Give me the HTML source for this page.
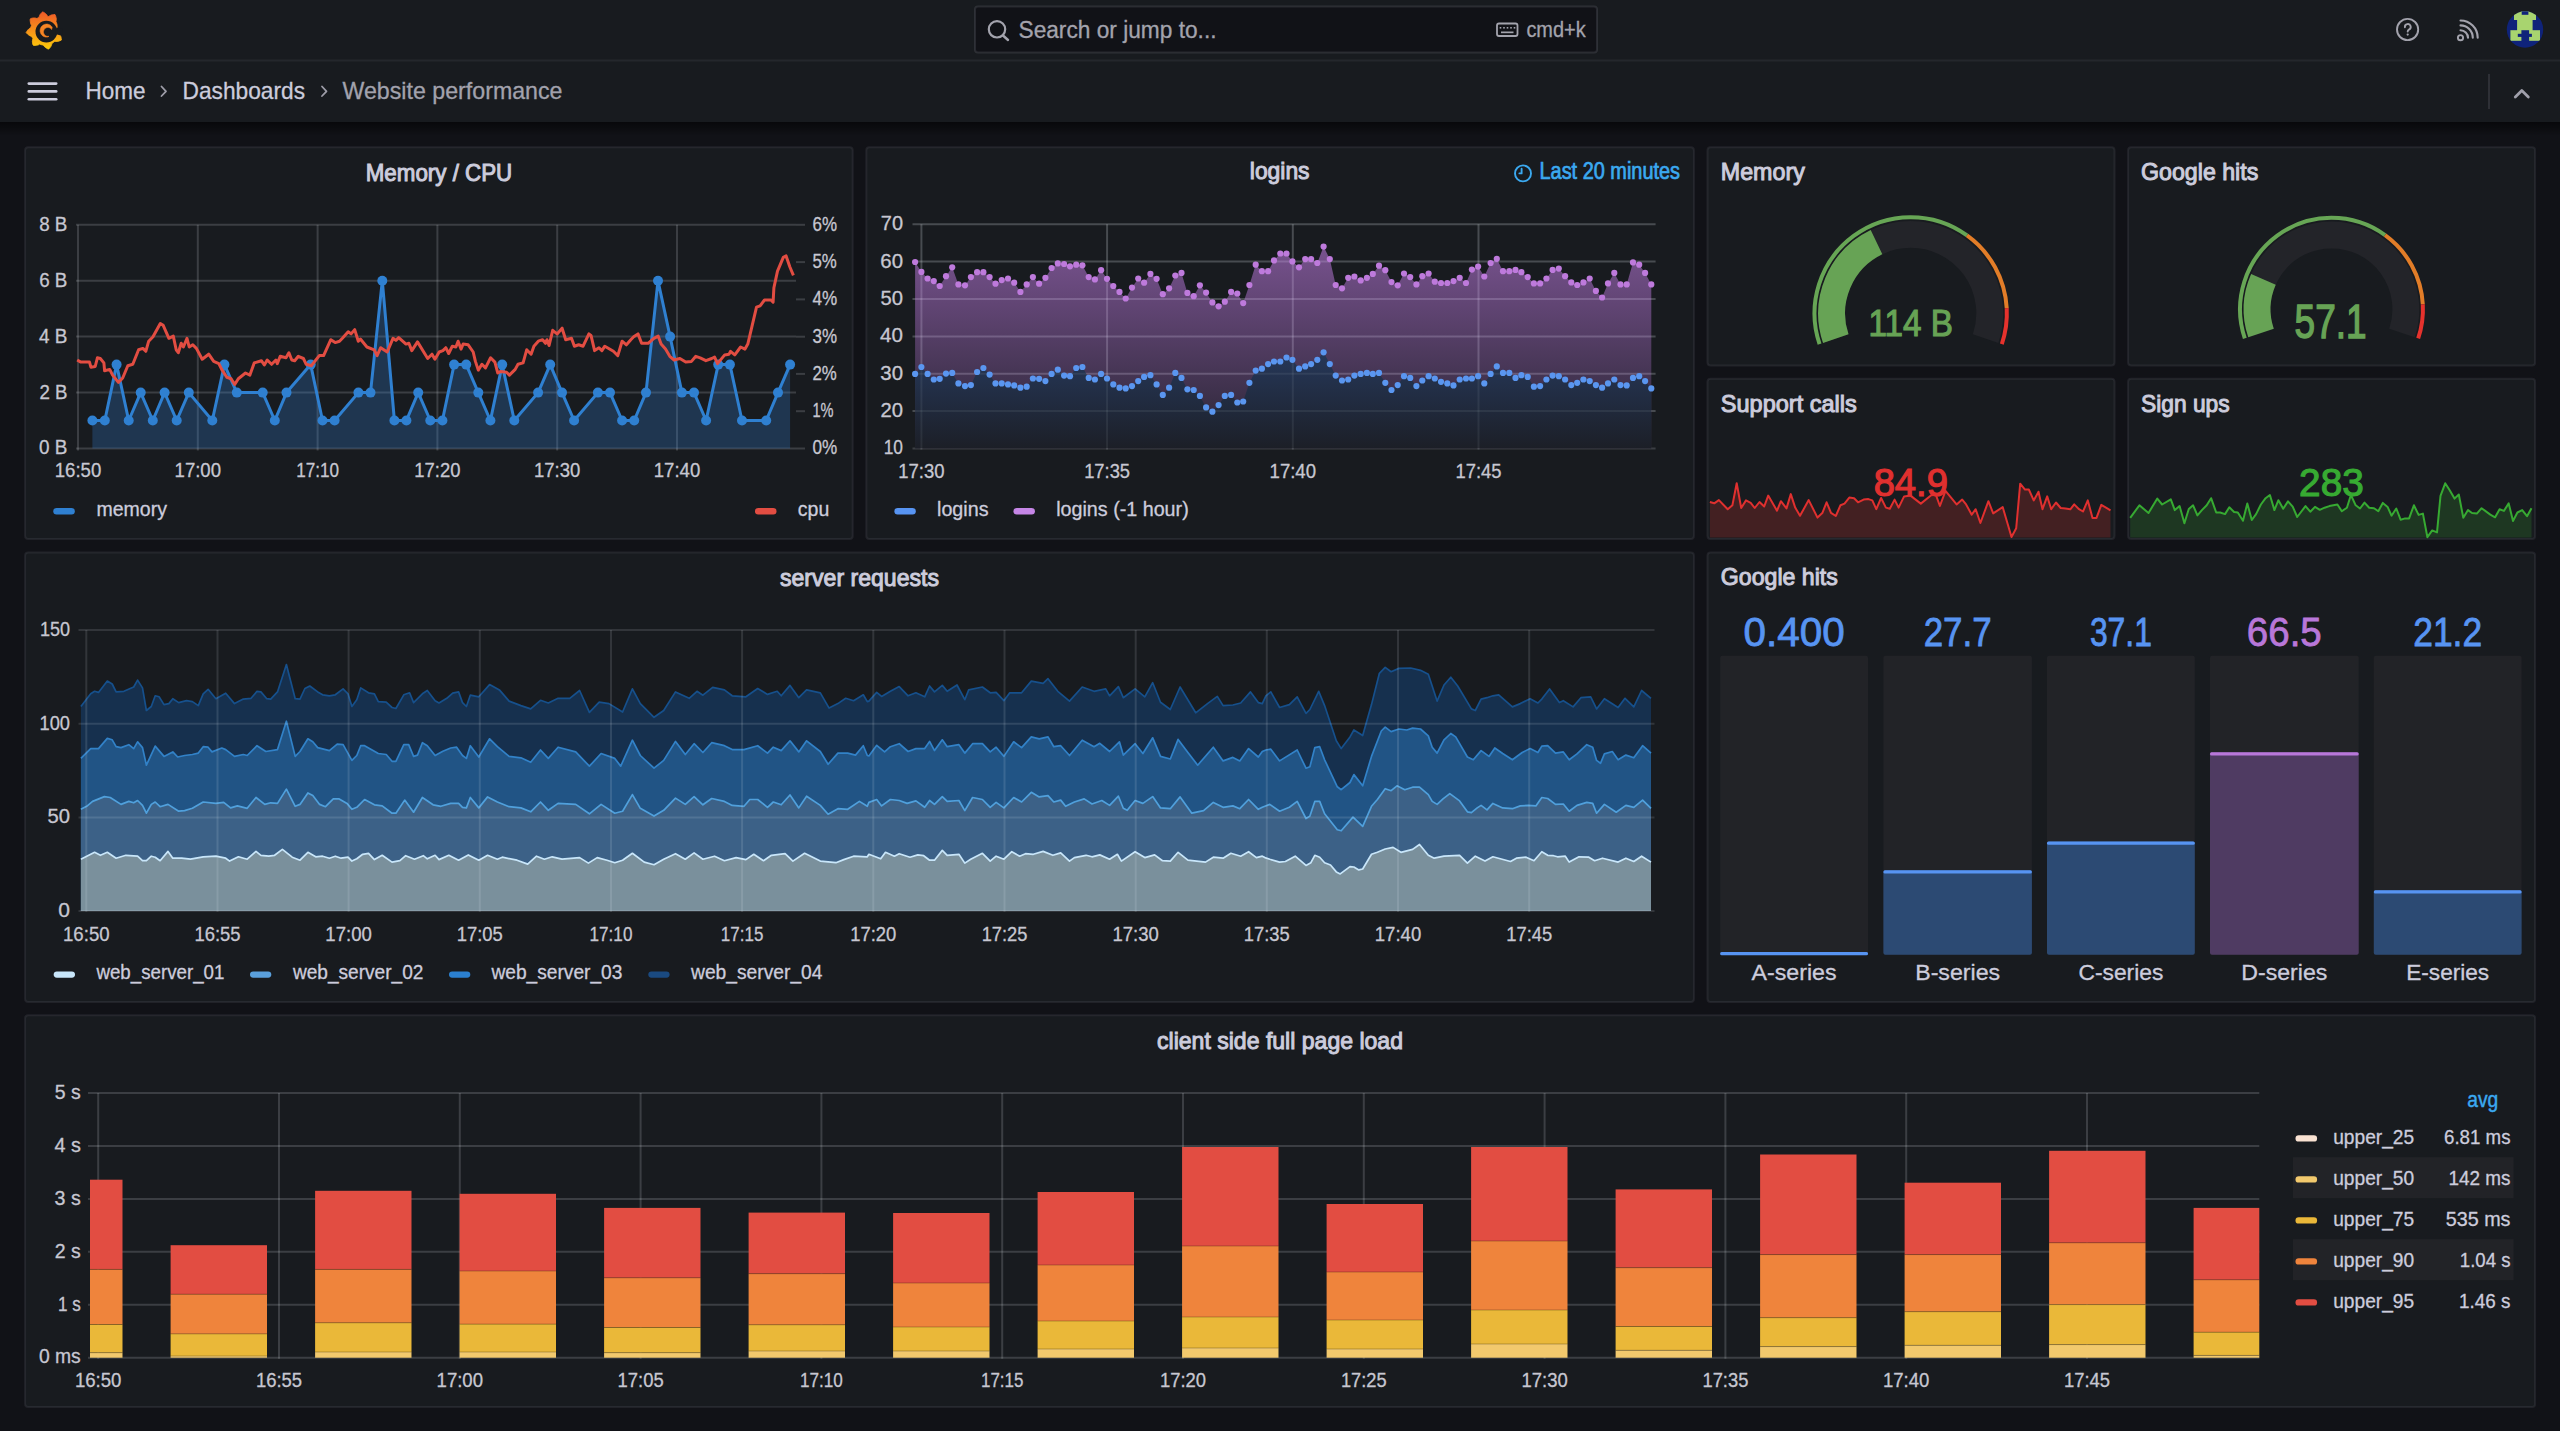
<!DOCTYPE html><html><head><meta charset="utf-8"><style>
html,body{margin:0;padding:0;background:#111217;width:2560px;height:1431px;overflow:hidden;}
svg{display:block;position:absolute;left:0;top:0;}
svg text{font-family:"Liberation Sans", sans-serif;}
</style></head><body>
<svg width="2560" height="1431" viewBox="0 0 2560 1431">
<defs>
<linearGradient id="logoG" x1="0" y1="0" x2="0" y2="1"><stop offset="0" stop-color="#f05a28"/><stop offset="1" stop-color="#fbca0a"/></linearGradient>
<linearGradient id="shadowG" x1="0" y1="0" x2="0" y2="1"><stop offset="0" stop-color="#000" stop-opacity="0.55"/><stop offset="1" stop-color="#000" stop-opacity="0"/></linearGradient>
<linearGradient id="purpG" x1="0" y1="0" x2="0" y2="1"><stop offset="0" stop-color="#b877d9" stop-opacity="0.6"/><stop offset="1" stop-color="#b877d9" stop-opacity="0.1"/></linearGradient>
<linearGradient id="blueG" x1="0" y1="0" x2="0" y2="1"><stop offset="0" stop-color="#26385a"/><stop offset="1" stop-color="#1c1f27"/></linearGradient>
<clipPath id="avClip"><circle cx="2525" cy="29.5" r="18.2"/></clipPath>
</defs>
<rect x="0" y="0" width="2560" height="1431" fill="#111217"/>

<rect x="0" y="0" width="2560" height="122" fill="#181b1f"/>
<rect x="0" y="59.5" width="2560" height="2" fill="rgba(204,204,220,0.07)"/>
<rect x="0" y="122" width="2560" height="14" fill="url(#shadowG)"/>
<path d="M27.4,30.6 L27.0,31.2 L26.6,31.9 L26.2,32.6 L26.7,33.2 L27.2,33.7 L27.8,34.3 L28.4,34.7 L29.0,35.2 L29.6,35.6 L30.3,35.9 L31.1,36.2 L31.8,36.5 L32.0,37.0 L32.2,37.4 L32.4,37.9 L32.7,38.3 L33.0,38.7 L32.6,39.6 L32.5,40.4 L32.4,41.1 L32.4,41.9 L32.5,42.7 L32.6,43.4 L32.8,44.2 L33.0,44.9 L33.5,45.3 L34.3,45.4 L35.0,45.4 L35.8,45.3 L36.5,45.2 L37.3,45.1 L38.0,44.9 L38.8,44.6 L39.6,44.0 L40.0,44.2 L40.5,44.4 L41.0,44.5 L41.5,44.7 L42.0,44.8 L42.5,44.9 L43.0,45.0 L43.5,45.0 L43.9,45.9 L44.4,46.5 L45.0,47.0 L45.6,47.5 L46.2,47.9 L46.9,48.3 L47.5,48.7 L48.2,49.0 L48.9,48.9 L49.4,48.3 L49.9,47.7 L50.4,47.1 L50.8,46.5 L51.1,45.8 L51.5,45.1 L51.7,44.3 L51.8,43.4 L52.2,43.2 L52.7,42.9 L53.1,42.6 L53.5,42.3 L53.9,42.0 L54.3,41.7 L54.7,41.4 L55.4,41.4 L56.2,41.4 L57.0,41.4 L57.8,41.3 L58.5,41.2 L59.2,40.9 L60.0,40.7 L60.7,40.4 L61.4,40.0 L61.3,39.3 L61.2,38.5 L61.1,37.8 L60.9,37.0 L60.7,36.3 L60.4,35.6 L60.0,34.9 L59.5,34.2 L54.8,32.7 L54.8,32.3 L54.9,32.0 L54.9,31.6 L55.0,31.3 L55.0,30.9 L55.0,30.6 L55.0,30.3 L55.0,29.9 L54.9,29.6 L54.9,29.2 L54.8,28.9 L54.8,28.5 L57.1,27.6 L57.1,27.1 L57.1,26.7 L57.1,26.2 L57.1,25.7 L57.0,25.2 L57.0,24.8 L56.9,24.3 L56.8,23.8 L56.6,23.3 L56.5,22.8 L56.3,22.4 L56.2,21.9 L55.9,21.4 L56.1,20.6 L56.2,19.8 L56.2,19.0 L56.2,18.2 L56.0,17.5 L55.8,16.7 L55.6,16.0 L55.3,15.3 L55.0,14.6 L54.2,14.6 L53.5,14.7 L52.7,14.8 L52.0,14.9 L51.2,15.1 L50.5,15.4 L49.8,15.8 L49.1,16.2 L48.5,16.5 L48.0,16.4 L47.5,16.3 L47.1,15.5 L46.7,14.8 L46.1,14.2 L45.6,13.7 L45.0,13.2 L44.4,12.8 L43.7,12.4 L43.0,12.0 L42.4,12.1 L41.8,12.6 L41.3,13.2 L40.8,13.7 L40.3,14.3 L39.9,15.0 L39.6,15.7 L39.3,16.4 L39.1,17.4 L38.6,17.6 L38.2,17.8 L37.8,18.0 L37.3,18.3 L36.9,18.6 L36.0,18.2 L35.2,18.1 L34.5,18.0 L33.7,18.0 L32.9,18.1 L32.2,18.2 L31.4,18.4 L30.7,18.6 L30.3,19.1 L30.2,19.9 L30.2,20.6 L30.3,21.4 L30.4,22.1 L30.5,22.9 L30.7,23.6 L31.0,24.4 L31.6,25.2 L31.4,25.6 L31.2,26.1 L31.1,26.6 L30.9,27.1 L30.8,27.6 L30.3,28.0 L29.6,28.4 L28.9,28.9 L28.4,29.4 L27.9,30.0 Z" fill="url(#logoG)" stroke="url(#logoG)" stroke-width="1.0" stroke-linejoin="round"/>
<circle cx="46.4" cy="31.6" r="10.9" fill="#181b1f"/>
<path d="M55.1,34.1 L55.1,33.8 L55.2,33.5 L55.3,33.2 L55.3,32.9 L55.4,32.5 L55.4,32.2 L55.4,31.9 L55.4,31.6 L55.4,31.3 L55.4,31.0 L55.4,30.7 L55.3,30.3 L55.3,30.0 L55.2,29.7 L62.0,28.0 L62.1,28.5 L62.2,29.1 L62.3,29.7 L62.3,30.2 L62.4,30.8 L62.4,31.3 L62.4,31.9 L62.4,32.4 L62.3,33.0 L62.3,33.5 L62.2,34.1 L62.1,34.7 L62.0,35.2 L61.9,35.7 Z" fill="#181b1f"/>
<path d="M52.2,27.3 L51.9,26.9 L51.7,26.5 L51.4,26.2 L51.0,25.8 L50.7,25.5 L50.3,25.3 L49.9,25.0 L49.6,24.8 L49.1,24.6 L48.7,24.5 L48.3,24.3 L47.8,24.2 L47.4,24.1 L46.9,24.1 L46.5,24.1 L46.0,24.1 L45.6,24.2 L45.1,24.3 L44.7,24.4 L44.3,24.5 L43.9,24.7 L43.4,24.9 L43.1,25.1 L42.7,25.4 L42.3,25.7 L42.0,26.0 L41.7,26.3 L41.4,26.7 L41.1,27.1 L40.9,27.4 L40.7,27.9 L40.5,28.3 L40.4,28.7 L40.3,29.1 L40.2,29.6 L40.1,30.0 L40.1,30.5 L40.1,30.9 L40.1,31.4 L40.2,31.8 L40.3,32.3 L40.5,32.7 L40.6,33.1 L40.8,33.6 L41.0,33.9 L41.3,34.3 L41.5,34.7 L41.8,35.0 L42.2,35.4 L42.5,35.7 L42.9,35.9 L43.3,36.2 L43.6,36.4 L44.1,36.6 L44.5,36.7 L44.9,36.9 L45.4,37.0 L45.8,37.1 L46.3,37.1 L46.7,37.1 L47.2,37.1 L47.6,37.0 L48.1,36.9 L49.0,36.2 L48.7,36.2 L48.4,36.3 L48.1,36.3 L47.7,36.3 L47.4,36.3 L47.1,36.2 L46.8,36.2 L46.5,36.1 L46.3,36.0 L46.0,35.9 L45.7,35.7 L45.4,35.5 L45.2,35.4 L45.0,35.2 L44.7,35.0 L44.5,34.7 L44.3,34.5 L44.2,34.2 L44.0,34.0 L43.9,33.7 L43.8,33.4 L43.7,33.1 L43.6,32.8 L43.5,32.5 L43.5,32.2 L43.5,31.9 L43.5,31.6 L43.5,31.3 L43.6,31.0 L43.7,30.7 L43.8,30.4 L43.9,30.1 L44.0,29.8 L44.2,29.6 L44.3,29.3 L44.5,29.1 L44.7,28.8 L45.0,28.6 L45.2,28.4 L45.4,28.3 L45.7,28.1 L46.0,27.9 L46.3,27.8 L46.5,27.7 L46.8,27.6 L47.1,27.6 L47.4,27.5 L47.7,27.5 L48.1,27.5 L48.4,27.5 L48.7,27.6 L49.0,27.6 L49.3,27.7 L49.5,27.8 L49.8,27.9 L50.1,28.1 L50.4,28.3 L50.6,28.4 L50.8,28.6 L51.1,28.8 L51.3,29.1 L51.5,29.3 L51.6,29.6 Z" fill="#f68424" stroke="#f68424" stroke-width="0.6" stroke-linejoin="round"/>
<rect x="975" y="6.5" width="622" height="46" rx="3" fill="#111217" stroke="rgba(204,204,220,0.13)" stroke-width="2"/>
<circle cx="997" cy="29.3" r="8.2" fill="none" stroke="#a3a3ad" stroke-width="2.2"/>
<line x1="1003" y1="35.5" x2="1008" y2="40" stroke="#a3a3ad" stroke-width="2.4" stroke-linecap="round"/>
<text x="1018.5" y="37.8" font-size="23.5" fill="#a3a3ad" text-anchor="start" font-weight="normal" textLength="198" lengthAdjust="spacingAndGlyphs" stroke="#a3a3ad" stroke-width="0.3" >Search or jump to...</text>
<rect x="1497" y="23.5" width="20.5" height="12.5" rx="2" fill="none" stroke="#a3a3ad" stroke-width="1.8"/>
<rect x="1499.7" y="27" width="1.6" height="1.6" fill="#a3a3ad"/>
<rect x="1503.2" y="27" width="1.6" height="1.6" fill="#a3a3ad"/>
<rect x="1506.7" y="27" width="1.6" height="1.6" fill="#a3a3ad"/>
<rect x="1510.2" y="27" width="1.6" height="1.6" fill="#a3a3ad"/>
<rect x="1513.7" y="27" width="1.6" height="1.6" fill="#a3a3ad"/>
<rect x="1501" y="31.5" width="12.5" height="1.7" fill="#a3a3ad"/>
<text x="1526.4" y="36.6" font-size="22" fill="#a3a3ad" text-anchor="start" font-weight="normal" textLength="59.3" lengthAdjust="spacingAndGlyphs" stroke="#a3a3ad" stroke-width="0.3" >cmd+k</text>
<circle cx="2407.6" cy="29.5" r="10.6" fill="none" stroke="#a3a3ad" stroke-width="1.9"/>
<path d="M2404.9,27.2 A2.9,2.9 0 1 1 2408.9,29.6 Q2407.7,30.3 2407.7,31.6" fill="none" stroke="#a3a3ad" stroke-width="1.9" stroke-linecap="round"/>
<circle cx="2407.7" cy="34.6" r="1.1" fill="#a3a3ad"/>
<circle cx="2460.5" cy="37.7" r="2.6" fill="none" stroke="#a3a3ad" stroke-width="1.9"/>
<path d="M2460.5,30.2 A7.5,7.5 0 0 1 2468.0,37.7" fill="none" stroke="#a3a3ad" stroke-width="2.1" stroke-linecap="round"/>
<path d="M2460.5,25.4 A12.3,12.3 0 0 1 2472.8,37.7" fill="none" stroke="#a3a3ad" stroke-width="2.1" stroke-linecap="round"/>
<path d="M2460.5,20.5 A17.2,17.2 0 0 1 2477.7,37.7" fill="none" stroke="#a3a3ad" stroke-width="2.1" stroke-linecap="round"/>
<g clip-path="url(#avClip)">
<rect x="2505" y="10" width="40" height="40" fill="#0f237a"/>
<rect x="2514" y="11" width="22" height="9" fill="#a8d46f"/>
<rect x="2521.7" y="10" width="6.7" height="4.8" fill="#0f237a"/>
<rect x="2517.1" y="19" width="15.5" height="12" fill="#a8d46f"/>
<rect x="2510.4" y="30.2" width="29.6" height="10.6" fill="#a8d46f"/>
<rect x="2521.4" y="30.2" width="7.7" height="11" fill="#0f237a"/>
<rect x="2517.8" y="33.8" width="14.1" height="3.1" fill="#0f237a"/>
</g>
<rect x="27.5" y="82.3" width="30" height="2.6" rx="1.3" fill="#ccccdc"/>
<rect x="27.5" y="90.1" width="30" height="2.6" rx="1.3" fill="#ccccdc"/>
<rect x="27.5" y="97.89999999999999" width="30" height="2.6" rx="1.3" fill="#ccccdc"/>
<text x="85.5" y="99.1" font-size="23.8" fill="#ccccdc" text-anchor="start" font-weight="normal" textLength="60" lengthAdjust="spacingAndGlyphs" stroke="#ccccdc" stroke-width="0.3" >Home</text>
<path d="M161.5,86.5 L166,91.3 L161.5,96" fill="none" stroke="#9d9da8" stroke-width="1.8" stroke-linecap="round" stroke-linejoin="round"/>
<text x="182.5" y="99.1" font-size="23.8" fill="#ccccdc" text-anchor="start" font-weight="normal" textLength="122.5" lengthAdjust="spacingAndGlyphs" stroke="#ccccdc" stroke-width="0.3" >Dashboards</text>
<path d="M322,86.5 L326.5,91.3 L322,96" fill="none" stroke="#9d9da8" stroke-width="1.8" stroke-linecap="round" stroke-linejoin="round"/>
<text x="342.5" y="99.1" font-size="23.8" fill="#a2a2ad" text-anchor="start" font-weight="normal" textLength="220" lengthAdjust="spacingAndGlyphs" stroke="#a2a2ad" stroke-width="0.3" >Website performance</text>
<rect x="2488" y="74" width="2" height="35" fill="rgba(204,204,220,0.12)"/>
<path d="M2515.3,97 L2521.8,90.6 L2528.3,97" fill="none" stroke="#a0a0ab" stroke-width="2.8" stroke-linecap="round" stroke-linejoin="round"/>
<rect x="25.1" y="147.3" width="827.6" height="391.8" rx="3" fill="#181b1f" stroke="rgba(204,204,220,0.09)" stroke-width="2"/>
<text x="439.0" y="180.5" font-size="24" fill="#ccccdc" text-anchor="middle" font-weight="normal" textLength="146.5" lengthAdjust="spacingAndGlyphs" stroke="#ccccdc" stroke-width="1.008" >Memory / CPU</text>
<line x1="76" y1="448.5" x2="796" y2="448.5" stroke="rgba(240,250,255,0.16)" stroke-width="2"/>
<text x="67.4" y="454.4" font-size="20" fill="#c7c7d1" text-anchor="end" font-weight="normal" textLength="28.4" lengthAdjust="spacingAndGlyphs" stroke="#c7c7d1" stroke-width="0.3" >0 B</text>
<line x1="76" y1="392.6" x2="796" y2="392.6" stroke="rgba(240,250,255,0.16)" stroke-width="2"/>
<text x="67.4" y="398.5" font-size="20" fill="#c7c7d1" text-anchor="end" font-weight="normal" textLength="28.0" lengthAdjust="spacingAndGlyphs" stroke="#c7c7d1" stroke-width="0.3" >2 B</text>
<line x1="76" y1="336.6" x2="796" y2="336.6" stroke="rgba(240,250,255,0.16)" stroke-width="2"/>
<text x="67.4" y="342.5" font-size="20" fill="#c7c7d1" text-anchor="end" font-weight="normal" textLength="28.4" lengthAdjust="spacingAndGlyphs" stroke="#c7c7d1" stroke-width="0.3" >4 B</text>
<line x1="76" y1="280.7" x2="796" y2="280.7" stroke="rgba(240,250,255,0.16)" stroke-width="2"/>
<text x="67.4" y="286.6" font-size="20" fill="#c7c7d1" text-anchor="end" font-weight="normal" textLength="28.2" lengthAdjust="spacingAndGlyphs" stroke="#c7c7d1" stroke-width="0.3" >6 B</text>
<line x1="76" y1="224.8" x2="796" y2="224.8" stroke="rgba(240,250,255,0.16)" stroke-width="2"/>
<text x="67.4" y="230.7" font-size="20" fill="#c7c7d1" text-anchor="end" font-weight="normal" textLength="28.2" lengthAdjust="spacingAndGlyphs" stroke="#c7c7d1" stroke-width="0.3" >8 B</text>
<line x1="796" y1="448.5" x2="805" y2="448.5" stroke="rgba(240,250,255,0.16)" stroke-width="2"/>
<text x="812.5" y="454.4" font-size="20" fill="#c7c7d1" text-anchor="start" font-weight="normal" textLength="24.7" lengthAdjust="spacingAndGlyphs" stroke="#c7c7d1" stroke-width="0.3" >0%</text>
<line x1="796" y1="411.2" x2="805" y2="411.2" stroke="rgba(240,250,255,0.16)" stroke-width="2"/>
<text x="812.5" y="417.1" font-size="20" fill="#c7c7d1" text-anchor="start" font-weight="normal" textLength="21.1" lengthAdjust="spacingAndGlyphs" stroke="#c7c7d1" stroke-width="0.3" >1%</text>
<line x1="796" y1="373.9" x2="805" y2="373.9" stroke="rgba(240,250,255,0.16)" stroke-width="2"/>
<text x="812.5" y="379.8" font-size="20" fill="#c7c7d1" text-anchor="start" font-weight="normal" textLength="24.3" lengthAdjust="spacingAndGlyphs" stroke="#c7c7d1" stroke-width="0.3" >2%</text>
<line x1="796" y1="336.7" x2="805" y2="336.7" stroke="rgba(240,250,255,0.16)" stroke-width="2"/>
<text x="812.5" y="342.6" font-size="20" fill="#c7c7d1" text-anchor="start" font-weight="normal" textLength="24.5" lengthAdjust="spacingAndGlyphs" stroke="#c7c7d1" stroke-width="0.3" >3%</text>
<line x1="796" y1="299.4" x2="805" y2="299.4" stroke="rgba(240,250,255,0.16)" stroke-width="2"/>
<text x="812.5" y="305.3" font-size="20" fill="#c7c7d1" text-anchor="start" font-weight="normal" textLength="24.7" lengthAdjust="spacingAndGlyphs" stroke="#c7c7d1" stroke-width="0.3" >4%</text>
<line x1="796" y1="262.1" x2="805" y2="262.1" stroke="rgba(240,250,255,0.16)" stroke-width="2"/>
<text x="812.5" y="268.0" font-size="20" fill="#c7c7d1" text-anchor="start" font-weight="normal" textLength="24.3" lengthAdjust="spacingAndGlyphs" stroke="#c7c7d1" stroke-width="0.3" >5%</text>
<line x1="796" y1="224.8" x2="805" y2="224.8" stroke="rgba(240,250,255,0.16)" stroke-width="2"/>
<text x="812.5" y="230.7" font-size="20" fill="#c7c7d1" text-anchor="start" font-weight="normal" textLength="24.5" lengthAdjust="spacingAndGlyphs" stroke="#c7c7d1" stroke-width="0.3" >6%</text>
<line x1="78.0" y1="224.8" x2="78.0" y2="450.5" stroke="rgba(240,250,255,0.16)" stroke-width="2"/>
<text x="78.0" y="477.2" font-size="20" fill="#c7c7d1" text-anchor="middle" font-weight="normal" textLength="46.6" lengthAdjust="spacingAndGlyphs" stroke="#c7c7d1" stroke-width="0.3" >16:50</text>
<line x1="197.8" y1="224.8" x2="197.8" y2="450.5" stroke="rgba(240,250,255,0.16)" stroke-width="2"/>
<text x="197.8" y="477.2" font-size="20" fill="#c7c7d1" text-anchor="middle" font-weight="normal" textLength="46.5" lengthAdjust="spacingAndGlyphs" stroke="#c7c7d1" stroke-width="0.3" >17:00</text>
<line x1="317.6" y1="224.8" x2="317.6" y2="450.5" stroke="rgba(240,250,255,0.16)" stroke-width="2"/>
<text x="317.6" y="477.2" font-size="20" fill="#c7c7d1" text-anchor="middle" font-weight="normal" textLength="42.9" lengthAdjust="spacingAndGlyphs" stroke="#c7c7d1" stroke-width="0.3" >17:10</text>
<line x1="437.4" y1="224.8" x2="437.4" y2="450.5" stroke="rgba(240,250,255,0.16)" stroke-width="2"/>
<text x="437.4" y="477.2" font-size="20" fill="#c7c7d1" text-anchor="middle" font-weight="normal" textLength="46.1" lengthAdjust="spacingAndGlyphs" stroke="#c7c7d1" stroke-width="0.3" >17:20</text>
<line x1="557.2" y1="224.8" x2="557.2" y2="450.5" stroke="rgba(240,250,255,0.16)" stroke-width="2"/>
<text x="557.2" y="477.2" font-size="20" fill="#c7c7d1" text-anchor="middle" font-weight="normal" textLength="46.3" lengthAdjust="spacingAndGlyphs" stroke="#c7c7d1" stroke-width="0.3" >17:30</text>
<line x1="677.0" y1="224.8" x2="677.0" y2="450.5" stroke="rgba(240,250,255,0.16)" stroke-width="2"/>
<text x="677.0" y="477.2" font-size="20" fill="#c7c7d1" text-anchor="middle" font-weight="normal" textLength="46.5" lengthAdjust="spacingAndGlyphs" stroke="#c7c7d1" stroke-width="0.3" >17:40</text>
<path d="M92.4,420.5 L104.8,420.5 L116.6,364.6 L128.7,420.5 L140.7,392.6 L152.8,420.5 L164.6,392.6 L176.7,420.5 L188.8,392.6 L212.3,420.5 L224.4,364.6 L236.8,392.6 L262.7,392.6 L274.8,420.5 L286.5,392.6 L310.7,364.6 L322.5,420.5 L334.6,420.5 L358.4,392.6 L370.5,392.6 L382.3,280.7 L394.4,420.5 L406.4,420.5 L418.2,392.6 L430.3,420.5 L442.4,420.5 L454.1,364.6 L466.2,364.6 L478.3,392.6 L490.4,420.5 L502.2,364.6 L514.3,420.5 L538.1,392.6 L550.2,364.6 L562.0,392.6 L574.1,420.5 L597.9,392.6 L610.0,392.6 L622.1,420.5 L634.2,420.5 L646.0,392.6 L658.0,280.7 L670.1,336.6 L681.9,392.6 L694.0,392.6 L706.1,420.5 L718.2,364.6 L729.9,364.6 L742.0,420.5 L766.2,420.5 L778.0,392.6 L790.1,364.6 L790.1,448.5 L92.4,448.5 Z" fill="rgba(50,130,215,0.27)"/>
<path d="M92.4,420.5 L104.8,420.5 L116.6,364.6 L128.7,420.5 L140.7,392.6 L152.8,420.5 L164.6,392.6 L176.7,420.5 L188.8,392.6 L212.3,420.5 L224.4,364.6 L236.8,392.6 L262.7,392.6 L274.8,420.5 L286.5,392.6 L310.7,364.6 L322.5,420.5 L334.6,420.5 L358.4,392.6 L370.5,392.6 L382.3,280.7 L394.4,420.5 L406.4,420.5 L418.2,392.6 L430.3,420.5 L442.4,420.5 L454.1,364.6 L466.2,364.6 L478.3,392.6 L490.4,420.5 L502.2,364.6 L514.3,420.5 L538.1,392.6 L550.2,364.6 L562.0,392.6 L574.1,420.5 L597.9,392.6 L610.0,392.6 L622.1,420.5 L634.2,420.5 L646.0,392.6 L658.0,280.7 L670.1,336.6 L681.9,392.6 L694.0,392.6 L706.1,420.5 L718.2,364.6 L729.9,364.6 L742.0,420.5 L766.2,420.5 L778.0,392.6 L790.1,364.6" fill="none" stroke="#2f80d1" stroke-width="3" stroke-linejoin="round"/>
<circle cx="92.4" cy="420.5" r="5" fill="#2f80d1"/>
<circle cx="104.8" cy="420.5" r="5" fill="#2f80d1"/>
<circle cx="116.6" cy="364.6" r="5" fill="#2f80d1"/>
<circle cx="128.7" cy="420.5" r="5" fill="#2f80d1"/>
<circle cx="140.7" cy="392.6" r="5" fill="#2f80d1"/>
<circle cx="152.8" cy="420.5" r="5" fill="#2f80d1"/>
<circle cx="164.6" cy="392.6" r="5" fill="#2f80d1"/>
<circle cx="176.7" cy="420.5" r="5" fill="#2f80d1"/>
<circle cx="188.8" cy="392.6" r="5" fill="#2f80d1"/>
<circle cx="212.3" cy="420.5" r="5" fill="#2f80d1"/>
<circle cx="224.4" cy="364.6" r="5" fill="#2f80d1"/>
<circle cx="236.8" cy="392.6" r="5" fill="#2f80d1"/>
<circle cx="262.7" cy="392.6" r="5" fill="#2f80d1"/>
<circle cx="274.8" cy="420.5" r="5" fill="#2f80d1"/>
<circle cx="286.5" cy="392.6" r="5" fill="#2f80d1"/>
<circle cx="310.7" cy="364.6" r="5" fill="#2f80d1"/>
<circle cx="322.5" cy="420.5" r="5" fill="#2f80d1"/>
<circle cx="334.6" cy="420.5" r="5" fill="#2f80d1"/>
<circle cx="358.4" cy="392.6" r="5" fill="#2f80d1"/>
<circle cx="370.5" cy="392.6" r="5" fill="#2f80d1"/>
<circle cx="382.3" cy="280.7" r="5" fill="#2f80d1"/>
<circle cx="394.4" cy="420.5" r="5" fill="#2f80d1"/>
<circle cx="406.4" cy="420.5" r="5" fill="#2f80d1"/>
<circle cx="418.2" cy="392.6" r="5" fill="#2f80d1"/>
<circle cx="430.3" cy="420.5" r="5" fill="#2f80d1"/>
<circle cx="442.4" cy="420.5" r="5" fill="#2f80d1"/>
<circle cx="454.1" cy="364.6" r="5" fill="#2f80d1"/>
<circle cx="466.2" cy="364.6" r="5" fill="#2f80d1"/>
<circle cx="478.3" cy="392.6" r="5" fill="#2f80d1"/>
<circle cx="490.4" cy="420.5" r="5" fill="#2f80d1"/>
<circle cx="502.2" cy="364.6" r="5" fill="#2f80d1"/>
<circle cx="514.3" cy="420.5" r="5" fill="#2f80d1"/>
<circle cx="538.1" cy="392.6" r="5" fill="#2f80d1"/>
<circle cx="550.2" cy="364.6" r="5" fill="#2f80d1"/>
<circle cx="562.0" cy="392.6" r="5" fill="#2f80d1"/>
<circle cx="574.1" cy="420.5" r="5" fill="#2f80d1"/>
<circle cx="597.9" cy="392.6" r="5" fill="#2f80d1"/>
<circle cx="610.0" cy="392.6" r="5" fill="#2f80d1"/>
<circle cx="622.1" cy="420.5" r="5" fill="#2f80d1"/>
<circle cx="634.2" cy="420.5" r="5" fill="#2f80d1"/>
<circle cx="646.0" cy="392.6" r="5" fill="#2f80d1"/>
<circle cx="658.0" cy="280.7" r="5" fill="#2f80d1"/>
<circle cx="670.1" cy="336.6" r="5" fill="#2f80d1"/>
<circle cx="681.9" cy="392.6" r="5" fill="#2f80d1"/>
<circle cx="694.0" cy="392.6" r="5" fill="#2f80d1"/>
<circle cx="706.1" cy="420.5" r="5" fill="#2f80d1"/>
<circle cx="718.2" cy="364.6" r="5" fill="#2f80d1"/>
<circle cx="729.9" cy="364.6" r="5" fill="#2f80d1"/>
<circle cx="742.0" cy="420.5" r="5" fill="#2f80d1"/>
<circle cx="766.2" cy="420.5" r="5" fill="#2f80d1"/>
<circle cx="778.0" cy="392.6" r="5" fill="#2f80d1"/>
<circle cx="790.1" cy="364.6" r="5" fill="#2f80d1"/>
<path d="M77.2,360.0 L80.8,362.1 L89.5,362.1 L90.9,367.2 L95.2,366.5 L97.4,357.8 L100.3,358.5 L103.9,362.9 L104.6,370.8 L109.7,369.4 L112.6,375.1 L118.4,382.4 L122.7,378.0 L127.8,365.7 L132.8,364.3 L138.6,349.8 L142.9,348.4 L145.8,351.3 L148.7,341.2 L153.0,336.8 L160.3,323.5 L163.2,325.3 L168.9,338.3 L173.3,336.1 L176.2,349.8 L178.3,352.7 L181.2,343.3 L183.4,347.0 L187.0,338.3 L189.2,347.0 L192.8,344.8 L196.4,348.4 L202.2,359.2 L208.7,354.2 L213.7,361.4 L218.8,363.6 L221.7,369.4 L226.8,377.3 L231.1,378.7 L234.7,384.5 L238.3,378.7 L245.5,373.0 L249.9,375.1 L254.2,362.9 L261.4,360.7 L264.3,365.0 L267.2,360.0 L271.6,364.3 L275.9,360.0 L277.3,363.6 L280.2,356.3 L286.0,357.8 L288.9,352.7 L291.8,360.0 L294.7,360.7 L298.3,356.3 L303.4,358.5 L306.2,364.3 L311.3,365.7 L319.3,355.6 L323.6,355.6 L330.8,339.7 L335.2,342.6 L339.5,341.2 L342.4,338.3 L348.2,331.8 L351.1,333.9 L354.7,329.6 L358.3,341.2 L360.4,339.0 L366.9,347.0 L374.2,349.8 L377.1,355.6 L380.7,347.7 L387.2,352.0 L393.0,338.3 L395.9,340.4 L398.7,337.6 L406.0,344.1 L408.9,343.3 L411.8,350.6 L417.5,341.9 L427.7,358.5 L432.0,354.2 L434.9,359.2 L439.2,352.0 L442.9,350.6 L445.8,347.7 L448.7,353.5 L452.3,346.2 L455.9,347.0 L458.1,341.2 L461.0,349.1 L463.1,344.1 L468.2,344.8 L473.2,352.0 L475.4,361.4 L478.3,370.1 L481.9,364.3 L485.5,367.9 L490.6,357.8 L494.9,362.1 L497.8,373.0 L500.7,371.5 L506.5,372.2 L509.4,375.1 L515.2,369.4 L518.0,364.3 L523.1,362.9 L526.7,349.8 L531.1,354.2 L533.9,346.2 L538.3,341.2 L542.6,339.7 L545.5,343.3 L547.0,339.7 L549.1,345.5 L552.7,330.3 L557.1,333.9 L562.1,328.2 L565.7,339.7 L571.5,338.3 L574.4,346.2 L578.7,344.8 L583.1,346.2 L588.9,333.9 L591.0,335.4 L594.6,350.6 L599.0,347.7 L601.9,350.6 L604.8,346.2 L613.4,351.3 L617.8,355.6 L622.1,341.2 L626.4,344.8 L630.8,339.7 L633.7,336.8 L638.0,333.9 L641.6,343.3 L648.1,343.3 L653.9,338.3 L658.2,336.1 L661.1,344.1 L665.5,349.1 L669.8,356.3 L674.1,360.0 L679.9,358.5 L685.7,362.1 L691.5,361.4 L695.8,356.3 L700.2,357.8 L705.9,360.7 L711.7,358.5 L714.6,357.1 L717.5,363.6 L724.7,354.9 L729.1,354.2 L730.5,351.3 L734.8,354.9 L740.6,347.0 L745.0,349.1 L747.8,344.1 L756.5,307.2 L760.1,305.8 L764.5,300.0 L771.0,300.0 L773.1,302.1 L773.9,287.7 L777.5,271.1 L783.3,257.3 L786.1,255.9 L789.8,266.7 L793.4,275.4" fill="none" stroke="#e24d42" stroke-width="3" stroke-linejoin="round"/>
<rect x="53.3" y="508" width="21.5" height="6.4" rx="3.2" fill="#2f80d1"/>
<text x="96.4" y="515.6" font-size="19.8" fill="#ccccdc" text-anchor="start" font-weight="normal" textLength="70.5" lengthAdjust="spacingAndGlyphs" stroke="#ccccdc" stroke-width="0.3" >memory</text>
<rect x="755" y="508" width="21.5" height="6.4" rx="3.2" fill="#e24d42"/>
<text x="797.8" y="515.6" font-size="19.8" fill="#ccccdc" text-anchor="start" font-weight="normal" textLength="31.5" lengthAdjust="spacingAndGlyphs" stroke="#ccccdc" stroke-width="0.3" >cpu</text>
<rect x="866.3" y="147.3" width="827.6" height="391.8" rx="3" fill="#181b1f" stroke="rgba(204,204,220,0.09)" stroke-width="2"/>
<text x="1279.7" y="179.4" font-size="24" fill="#ccccdc" text-anchor="middle" font-weight="normal" textLength="59.7" lengthAdjust="spacingAndGlyphs" stroke="#ccccdc" stroke-width="1.008" >logins</text>
<circle cx="1523" cy="173.4" r="8" fill="none" stroke="#3ba9f0" stroke-width="1.9"/>
<path d="M1521.6,168.8 L1521.6,173.4 L1519.4,173.4" fill="none" stroke="#3ba9f0" stroke-width="1.9" stroke-linecap="round" stroke-linejoin="round"/>
<text x="1539.5" y="178.6" font-size="23" fill="#3ba9f0" text-anchor="start" font-weight="normal" textLength="140.5" lengthAdjust="spacingAndGlyphs" stroke="#3ba9f0" stroke-width="0.69" >Last 20 minutes</text>
<line x1="912.5" y1="448.4" x2="1655.6" y2="448.4" stroke="rgba(240,250,255,0.16)" stroke-width="2"/>
<text x="903.0" y="454.3" font-size="20" fill="#c7c7d1" text-anchor="end" font-weight="normal" textLength="19.3" lengthAdjust="spacingAndGlyphs" stroke="#c7c7d1" stroke-width="0.3" >10</text>
<line x1="912.5" y1="411.0" x2="1655.6" y2="411.0" stroke="rgba(240,250,255,0.16)" stroke-width="2"/>
<text x="903.0" y="416.9" font-size="20" fill="#c7c7d1" text-anchor="end" font-weight="normal" textLength="22.5" lengthAdjust="spacingAndGlyphs" stroke="#c7c7d1" stroke-width="0.3" >20</text>
<line x1="912.5" y1="373.7" x2="1655.6" y2="373.7" stroke="rgba(240,250,255,0.16)" stroke-width="2"/>
<text x="903.0" y="379.6" font-size="20" fill="#c7c7d1" text-anchor="end" font-weight="normal" textLength="22.7" lengthAdjust="spacingAndGlyphs" stroke="#c7c7d1" stroke-width="0.3" >30</text>
<line x1="912.5" y1="336.4" x2="1655.6" y2="336.4" stroke="rgba(240,250,255,0.16)" stroke-width="2"/>
<text x="903.0" y="342.2" font-size="20" fill="#c7c7d1" text-anchor="end" font-weight="normal" textLength="22.9" lengthAdjust="spacingAndGlyphs" stroke="#c7c7d1" stroke-width="0.3" >40</text>
<line x1="912.5" y1="299.0" x2="1655.6" y2="299.0" stroke="rgba(240,250,255,0.16)" stroke-width="2"/>
<text x="903.0" y="304.9" font-size="20" fill="#c7c7d1" text-anchor="end" font-weight="normal" textLength="22.5" lengthAdjust="spacingAndGlyphs" stroke="#c7c7d1" stroke-width="0.3" >50</text>
<line x1="912.5" y1="261.6" x2="1655.6" y2="261.6" stroke="rgba(240,250,255,0.16)" stroke-width="2"/>
<text x="903.0" y="267.5" font-size="20" fill="#c7c7d1" text-anchor="end" font-weight="normal" textLength="22.7" lengthAdjust="spacingAndGlyphs" stroke="#c7c7d1" stroke-width="0.3" >60</text>
<line x1="912.5" y1="224.3" x2="1655.6" y2="224.3" stroke="rgba(240,250,255,0.16)" stroke-width="2"/>
<text x="903.0" y="230.2" font-size="20" fill="#c7c7d1" text-anchor="end" font-weight="normal" textLength="22.2" lengthAdjust="spacingAndGlyphs" stroke="#c7c7d1" stroke-width="0.3" >70</text>
<line x1="921.4" y1="224.3" x2="921.4" y2="449.4" stroke="rgba(240,250,255,0.16)" stroke-width="2"/>
<text x="921.4" y="477.5" font-size="20" fill="#c7c7d1" text-anchor="middle" font-weight="normal" textLength="46.3" lengthAdjust="spacingAndGlyphs" stroke="#c7c7d1" stroke-width="0.3" >17:30</text>
<line x1="1107.1" y1="224.3" x2="1107.1" y2="449.4" stroke="rgba(240,250,255,0.16)" stroke-width="2"/>
<text x="1107.1" y="477.5" font-size="20" fill="#c7c7d1" text-anchor="middle" font-weight="normal" textLength="45.9" lengthAdjust="spacingAndGlyphs" stroke="#c7c7d1" stroke-width="0.3" >17:35</text>
<line x1="1292.8" y1="224.3" x2="1292.8" y2="449.4" stroke="rgba(240,250,255,0.16)" stroke-width="2"/>
<text x="1292.8" y="477.5" font-size="20" fill="#c7c7d1" text-anchor="middle" font-weight="normal" textLength="46.5" lengthAdjust="spacingAndGlyphs" stroke="#c7c7d1" stroke-width="0.3" >17:40</text>
<line x1="1478.5" y1="224.3" x2="1478.5" y2="449.4" stroke="rgba(240,250,255,0.16)" stroke-width="2"/>
<text x="1478.5" y="477.5" font-size="20" fill="#c7c7d1" text-anchor="middle" font-weight="normal" textLength="46.1" lengthAdjust="spacingAndGlyphs" stroke="#c7c7d1" stroke-width="0.3" >17:45</text>
<path d="M915.1,262.0 L921.4,271.9 L927.6,278.5 L933.8,281.1 L939.7,286.0 L946.0,276.2 L952.2,267.3 L958.4,284.4 L965.0,285.3 L970.9,277.1 L977.1,272.2 L983.4,272.2 L989.6,277.1 L995.5,283.7 L1001.7,280.1 L1008.0,278.5 L1014.2,282.7 L1020.4,291.9 L1026.7,284.4 L1032.9,277.1 L1039.1,283.7 L1045.4,277.8 L1051.6,268.0 L1057.8,263.4 L1064.1,264.0 L1070.0,266.3 L1076.2,264.7 L1082.4,265.3 L1088.7,277.1 L1094.9,279.4 L1101.1,270.2 L1107.0,278.8 L1113.3,286.0 L1119.5,291.9 L1125.7,298.5 L1132.0,287.6 L1138.2,278.5 L1144.1,282.7 L1150.4,273.9 L1156.6,278.8 L1162.8,294.2 L1169.1,288.3 L1175.3,275.5 L1181.5,272.9 L1187.4,292.9 L1193.7,296.2 L1199.9,285.3 L1206.1,292.6 L1212.4,302.4 L1218.6,306.3 L1224.8,301.7 L1231.1,291.9 L1237.3,293.5 L1243.2,303.1 L1249.4,285.0 L1255.7,264.7 L1261.9,271.2 L1268.1,271.2 L1274.0,260.4 L1280.3,253.5 L1286.5,253.5 L1292.4,261.4 L1299.0,267.3 L1305.2,259.1 L1311.1,259.1 L1317.3,263.0 L1323.6,246.6 L1329.8,259.1 L1335.7,285.0 L1342.0,288.3 L1348.2,277.8 L1354.4,276.5 L1360.7,280.4 L1366.9,277.8 L1372.8,273.9 L1379.0,265.7 L1385.3,270.2 L1391.5,282.1 L1397.7,285.3 L1404.0,273.5 L1410.2,277.1 L1416.4,284.4 L1422.3,276.2 L1428.6,273.5 L1434.8,281.7 L1441.0,283.0 L1447.3,283.0 L1453.5,281.1 L1459.7,277.8 L1466.0,283.0 L1471.9,269.6 L1478.1,266.6 L1484.3,276.5 L1490.6,263.0 L1496.8,258.8 L1503.0,271.2 L1509.3,271.2 L1515.5,269.9 L1521.4,272.2 L1527.7,277.1 L1533.9,283.4 L1540.1,283.4 L1546.4,278.5 L1552.6,269.9 L1558.8,268.6 L1565.1,276.2 L1571.3,282.4 L1577.2,285.0 L1583.4,282.4 L1589.7,278.5 L1595.9,290.9 L1602.1,297.5 L1608.0,283.4 L1614.3,272.9 L1620.5,284.4 L1626.7,284.4 L1633.0,262.4 L1639.2,264.7 L1645.1,272.9 L1651.3,284.4 L1651.3,448.4 L915.1,448.4 Z" fill="url(#purpG)"/>
<path d="M915.1,373.9 L921.4,367.0 L927.6,373.9 L933.8,379.5 L939.7,378.8 L946.0,373.6 L952.2,372.9 L958.4,383.4 L965.0,386.1 L970.9,385.1 L977.1,372.0 L983.4,368.0 L989.6,374.6 L995.5,383.4 L1001.7,383.4 L1008.0,384.4 L1014.2,385.4 L1020.4,387.7 L1026.7,386.7 L1032.9,378.5 L1039.1,378.8 L1045.4,381.1 L1051.6,373.9 L1057.8,369.7 L1064.1,375.6 L1070.0,376.2 L1076.2,368.0 L1082.4,367.0 L1088.7,377.9 L1094.9,379.5 L1101.1,373.9 L1107.0,378.5 L1113.3,384.4 L1119.5,387.7 L1125.7,388.4 L1132.0,386.1 L1138.2,381.1 L1144.1,376.9 L1150.4,375.2 L1156.6,384.4 L1162.8,394.9 L1169.1,387.7 L1175.3,372.9 L1181.5,377.9 L1187.4,389.3 L1193.7,390.0 L1199.9,395.9 L1206.1,407.4 L1212.4,411.7 L1218.6,405.1 L1224.8,395.9 L1231.1,394.9 L1237.3,402.5 L1243.2,401.5 L1249.4,382.8 L1255.7,370.6 L1261.9,368.7 L1268.1,364.1 L1274.0,361.5 L1280.3,361.5 L1286.5,357.5 L1292.4,359.8 L1299.0,368.7 L1305.2,366.4 L1311.1,364.1 L1317.3,359.8 L1323.6,352.3 L1329.8,364.1 L1335.7,375.6 L1342.0,380.5 L1348.2,379.5 L1354.4,375.6 L1360.7,373.9 L1366.9,372.9 L1372.8,373.9 L1379.0,372.9 L1385.3,382.8 L1391.5,390.0 L1397.7,385.1 L1404.0,376.2 L1410.2,377.9 L1416.4,386.1 L1422.3,380.5 L1428.6,376.2 L1434.8,378.5 L1441.0,381.8 L1447.3,383.4 L1453.5,385.4 L1459.7,379.5 L1466.0,378.5 L1471.9,378.5 L1478.1,376.2 L1484.3,383.4 L1490.6,373.9 L1496.8,366.4 L1503.0,372.9 L1509.3,372.9 L1515.5,377.9 L1521.4,375.2 L1527.7,376.9 L1533.9,386.7 L1540.1,386.1 L1546.4,379.5 L1552.6,375.6 L1558.8,376.2 L1565.1,379.5 L1571.3,385.1 L1577.2,382.8 L1583.4,379.5 L1589.7,381.1 L1595.9,385.1 L1602.1,387.7 L1608.0,383.4 L1614.3,379.5 L1620.5,385.1 L1626.7,385.4 L1633.0,377.9 L1639.2,376.2 L1645.1,381.1 L1651.3,388.4 L1651.3,448.4 L915.1,448.4 Z" fill="url(#blueG)"/>
<line x1="912.5" y1="411.0" x2="1655.6" y2="411.0" stroke="rgba(240,250,255,0.07)" stroke-width="2"/>
<line x1="912.5" y1="373.7" x2="1655.6" y2="373.7" stroke="rgba(240,250,255,0.07)" stroke-width="2"/>
<line x1="912.5" y1="336.4" x2="1655.6" y2="336.4" stroke="rgba(240,250,255,0.07)" stroke-width="2"/>
<line x1="912.5" y1="299.0" x2="1655.6" y2="299.0" stroke="rgba(240,250,255,0.07)" stroke-width="2"/>
<line x1="912.5" y1="261.6" x2="1655.6" y2="261.6" stroke="rgba(240,250,255,0.07)" stroke-width="2"/>
<line x1="912.5" y1="224.3" x2="1655.6" y2="224.3" stroke="rgba(240,250,255,0.07)" stroke-width="2"/>
<line x1="921.4" y1="224.3" x2="921.4" y2="449.4" stroke="rgba(240,250,255,0.07)" stroke-width="2"/>
<line x1="1107.1" y1="224.3" x2="1107.1" y2="449.4" stroke="rgba(240,250,255,0.07)" stroke-width="2"/>
<line x1="1292.8" y1="224.3" x2="1292.8" y2="449.4" stroke="rgba(240,250,255,0.07)" stroke-width="2"/>
<line x1="1478.5" y1="224.3" x2="1478.5" y2="449.4" stroke="rgba(240,250,255,0.07)" stroke-width="2"/>
<circle cx="915.1" cy="262.0" r="3.1" fill="#be7adc"/>
<circle cx="921.4" cy="271.9" r="3.1" fill="#be7adc"/>
<circle cx="927.6" cy="278.5" r="3.1" fill="#be7adc"/>
<circle cx="933.8" cy="281.1" r="3.1" fill="#be7adc"/>
<circle cx="939.7" cy="286.0" r="3.1" fill="#be7adc"/>
<circle cx="946.0" cy="276.2" r="3.1" fill="#be7adc"/>
<circle cx="952.2" cy="267.3" r="3.1" fill="#be7adc"/>
<circle cx="958.4" cy="284.4" r="3.1" fill="#be7adc"/>
<circle cx="965.0" cy="285.3" r="3.1" fill="#be7adc"/>
<circle cx="970.9" cy="277.1" r="3.1" fill="#be7adc"/>
<circle cx="977.1" cy="272.2" r="3.1" fill="#be7adc"/>
<circle cx="983.4" cy="272.2" r="3.1" fill="#be7adc"/>
<circle cx="989.6" cy="277.1" r="3.1" fill="#be7adc"/>
<circle cx="995.5" cy="283.7" r="3.1" fill="#be7adc"/>
<circle cx="1001.7" cy="280.1" r="3.1" fill="#be7adc"/>
<circle cx="1008.0" cy="278.5" r="3.1" fill="#be7adc"/>
<circle cx="1014.2" cy="282.7" r="3.1" fill="#be7adc"/>
<circle cx="1020.4" cy="291.9" r="3.1" fill="#be7adc"/>
<circle cx="1026.7" cy="284.4" r="3.1" fill="#be7adc"/>
<circle cx="1032.9" cy="277.1" r="3.1" fill="#be7adc"/>
<circle cx="1039.1" cy="283.7" r="3.1" fill="#be7adc"/>
<circle cx="1045.4" cy="277.8" r="3.1" fill="#be7adc"/>
<circle cx="1051.6" cy="268.0" r="3.1" fill="#be7adc"/>
<circle cx="1057.8" cy="263.4" r="3.1" fill="#be7adc"/>
<circle cx="1064.1" cy="264.0" r="3.1" fill="#be7adc"/>
<circle cx="1070.0" cy="266.3" r="3.1" fill="#be7adc"/>
<circle cx="1076.2" cy="264.7" r="3.1" fill="#be7adc"/>
<circle cx="1082.4" cy="265.3" r="3.1" fill="#be7adc"/>
<circle cx="1088.7" cy="277.1" r="3.1" fill="#be7adc"/>
<circle cx="1094.9" cy="279.4" r="3.1" fill="#be7adc"/>
<circle cx="1101.1" cy="270.2" r="3.1" fill="#be7adc"/>
<circle cx="1107.0" cy="278.8" r="3.1" fill="#be7adc"/>
<circle cx="1113.3" cy="286.0" r="3.1" fill="#be7adc"/>
<circle cx="1119.5" cy="291.9" r="3.1" fill="#be7adc"/>
<circle cx="1125.7" cy="298.5" r="3.1" fill="#be7adc"/>
<circle cx="1132.0" cy="287.6" r="3.1" fill="#be7adc"/>
<circle cx="1138.2" cy="278.5" r="3.1" fill="#be7adc"/>
<circle cx="1144.1" cy="282.7" r="3.1" fill="#be7adc"/>
<circle cx="1150.4" cy="273.9" r="3.1" fill="#be7adc"/>
<circle cx="1156.6" cy="278.8" r="3.1" fill="#be7adc"/>
<circle cx="1162.8" cy="294.2" r="3.1" fill="#be7adc"/>
<circle cx="1169.1" cy="288.3" r="3.1" fill="#be7adc"/>
<circle cx="1175.3" cy="275.5" r="3.1" fill="#be7adc"/>
<circle cx="1181.5" cy="272.9" r="3.1" fill="#be7adc"/>
<circle cx="1187.4" cy="292.9" r="3.1" fill="#be7adc"/>
<circle cx="1193.7" cy="296.2" r="3.1" fill="#be7adc"/>
<circle cx="1199.9" cy="285.3" r="3.1" fill="#be7adc"/>
<circle cx="1206.1" cy="292.6" r="3.1" fill="#be7adc"/>
<circle cx="1212.4" cy="302.4" r="3.1" fill="#be7adc"/>
<circle cx="1218.6" cy="306.3" r="3.1" fill="#be7adc"/>
<circle cx="1224.8" cy="301.7" r="3.1" fill="#be7adc"/>
<circle cx="1231.1" cy="291.9" r="3.1" fill="#be7adc"/>
<circle cx="1237.3" cy="293.5" r="3.1" fill="#be7adc"/>
<circle cx="1243.2" cy="303.1" r="3.1" fill="#be7adc"/>
<circle cx="1249.4" cy="285.0" r="3.1" fill="#be7adc"/>
<circle cx="1255.7" cy="264.7" r="3.1" fill="#be7adc"/>
<circle cx="1261.9" cy="271.2" r="3.1" fill="#be7adc"/>
<circle cx="1268.1" cy="271.2" r="3.1" fill="#be7adc"/>
<circle cx="1274.0" cy="260.4" r="3.1" fill="#be7adc"/>
<circle cx="1280.3" cy="253.5" r="3.1" fill="#be7adc"/>
<circle cx="1286.5" cy="253.5" r="3.1" fill="#be7adc"/>
<circle cx="1292.4" cy="261.4" r="3.1" fill="#be7adc"/>
<circle cx="1299.0" cy="267.3" r="3.1" fill="#be7adc"/>
<circle cx="1305.2" cy="259.1" r="3.1" fill="#be7adc"/>
<circle cx="1311.1" cy="259.1" r="3.1" fill="#be7adc"/>
<circle cx="1317.3" cy="263.0" r="3.1" fill="#be7adc"/>
<circle cx="1323.6" cy="246.6" r="3.1" fill="#be7adc"/>
<circle cx="1329.8" cy="259.1" r="3.1" fill="#be7adc"/>
<circle cx="1335.7" cy="285.0" r="3.1" fill="#be7adc"/>
<circle cx="1342.0" cy="288.3" r="3.1" fill="#be7adc"/>
<circle cx="1348.2" cy="277.8" r="3.1" fill="#be7adc"/>
<circle cx="1354.4" cy="276.5" r="3.1" fill="#be7adc"/>
<circle cx="1360.7" cy="280.4" r="3.1" fill="#be7adc"/>
<circle cx="1366.9" cy="277.8" r="3.1" fill="#be7adc"/>
<circle cx="1372.8" cy="273.9" r="3.1" fill="#be7adc"/>
<circle cx="1379.0" cy="265.7" r="3.1" fill="#be7adc"/>
<circle cx="1385.3" cy="270.2" r="3.1" fill="#be7adc"/>
<circle cx="1391.5" cy="282.1" r="3.1" fill="#be7adc"/>
<circle cx="1397.7" cy="285.3" r="3.1" fill="#be7adc"/>
<circle cx="1404.0" cy="273.5" r="3.1" fill="#be7adc"/>
<circle cx="1410.2" cy="277.1" r="3.1" fill="#be7adc"/>
<circle cx="1416.4" cy="284.4" r="3.1" fill="#be7adc"/>
<circle cx="1422.3" cy="276.2" r="3.1" fill="#be7adc"/>
<circle cx="1428.6" cy="273.5" r="3.1" fill="#be7adc"/>
<circle cx="1434.8" cy="281.7" r="3.1" fill="#be7adc"/>
<circle cx="1441.0" cy="283.0" r="3.1" fill="#be7adc"/>
<circle cx="1447.3" cy="283.0" r="3.1" fill="#be7adc"/>
<circle cx="1453.5" cy="281.1" r="3.1" fill="#be7adc"/>
<circle cx="1459.7" cy="277.8" r="3.1" fill="#be7adc"/>
<circle cx="1466.0" cy="283.0" r="3.1" fill="#be7adc"/>
<circle cx="1471.9" cy="269.6" r="3.1" fill="#be7adc"/>
<circle cx="1478.1" cy="266.6" r="3.1" fill="#be7adc"/>
<circle cx="1484.3" cy="276.5" r="3.1" fill="#be7adc"/>
<circle cx="1490.6" cy="263.0" r="3.1" fill="#be7adc"/>
<circle cx="1496.8" cy="258.8" r="3.1" fill="#be7adc"/>
<circle cx="1503.0" cy="271.2" r="3.1" fill="#be7adc"/>
<circle cx="1509.3" cy="271.2" r="3.1" fill="#be7adc"/>
<circle cx="1515.5" cy="269.9" r="3.1" fill="#be7adc"/>
<circle cx="1521.4" cy="272.2" r="3.1" fill="#be7adc"/>
<circle cx="1527.7" cy="277.1" r="3.1" fill="#be7adc"/>
<circle cx="1533.9" cy="283.4" r="3.1" fill="#be7adc"/>
<circle cx="1540.1" cy="283.4" r="3.1" fill="#be7adc"/>
<circle cx="1546.4" cy="278.5" r="3.1" fill="#be7adc"/>
<circle cx="1552.6" cy="269.9" r="3.1" fill="#be7adc"/>
<circle cx="1558.8" cy="268.6" r="3.1" fill="#be7adc"/>
<circle cx="1565.1" cy="276.2" r="3.1" fill="#be7adc"/>
<circle cx="1571.3" cy="282.4" r="3.1" fill="#be7adc"/>
<circle cx="1577.2" cy="285.0" r="3.1" fill="#be7adc"/>
<circle cx="1583.4" cy="282.4" r="3.1" fill="#be7adc"/>
<circle cx="1589.7" cy="278.5" r="3.1" fill="#be7adc"/>
<circle cx="1595.9" cy="290.9" r="3.1" fill="#be7adc"/>
<circle cx="1602.1" cy="297.5" r="3.1" fill="#be7adc"/>
<circle cx="1608.0" cy="283.4" r="3.1" fill="#be7adc"/>
<circle cx="1614.3" cy="272.9" r="3.1" fill="#be7adc"/>
<circle cx="1620.5" cy="284.4" r="3.1" fill="#be7adc"/>
<circle cx="1626.7" cy="284.4" r="3.1" fill="#be7adc"/>
<circle cx="1633.0" cy="262.4" r="3.1" fill="#be7adc"/>
<circle cx="1639.2" cy="264.7" r="3.1" fill="#be7adc"/>
<circle cx="1645.1" cy="272.9" r="3.1" fill="#be7adc"/>
<circle cx="1651.3" cy="284.4" r="3.1" fill="#be7adc"/>
<circle cx="915.1" cy="373.9" r="3.1" fill="#5a96f0"/>
<circle cx="921.4" cy="367.0" r="3.1" fill="#5a96f0"/>
<circle cx="927.6" cy="373.9" r="3.1" fill="#5a96f0"/>
<circle cx="933.8" cy="379.5" r="3.1" fill="#5a96f0"/>
<circle cx="939.7" cy="378.8" r="3.1" fill="#5a96f0"/>
<circle cx="946.0" cy="373.6" r="3.1" fill="#5a96f0"/>
<circle cx="952.2" cy="372.9" r="3.1" fill="#5a96f0"/>
<circle cx="958.4" cy="383.4" r="3.1" fill="#5a96f0"/>
<circle cx="965.0" cy="386.1" r="3.1" fill="#5a96f0"/>
<circle cx="970.9" cy="385.1" r="3.1" fill="#5a96f0"/>
<circle cx="977.1" cy="372.0" r="3.1" fill="#5a96f0"/>
<circle cx="983.4" cy="368.0" r="3.1" fill="#5a96f0"/>
<circle cx="989.6" cy="374.6" r="3.1" fill="#5a96f0"/>
<circle cx="995.5" cy="383.4" r="3.1" fill="#5a96f0"/>
<circle cx="1001.7" cy="383.4" r="3.1" fill="#5a96f0"/>
<circle cx="1008.0" cy="384.4" r="3.1" fill="#5a96f0"/>
<circle cx="1014.2" cy="385.4" r="3.1" fill="#5a96f0"/>
<circle cx="1020.4" cy="387.7" r="3.1" fill="#5a96f0"/>
<circle cx="1026.7" cy="386.7" r="3.1" fill="#5a96f0"/>
<circle cx="1032.9" cy="378.5" r="3.1" fill="#5a96f0"/>
<circle cx="1039.1" cy="378.8" r="3.1" fill="#5a96f0"/>
<circle cx="1045.4" cy="381.1" r="3.1" fill="#5a96f0"/>
<circle cx="1051.6" cy="373.9" r="3.1" fill="#5a96f0"/>
<circle cx="1057.8" cy="369.7" r="3.1" fill="#5a96f0"/>
<circle cx="1064.1" cy="375.6" r="3.1" fill="#5a96f0"/>
<circle cx="1070.0" cy="376.2" r="3.1" fill="#5a96f0"/>
<circle cx="1076.2" cy="368.0" r="3.1" fill="#5a96f0"/>
<circle cx="1082.4" cy="367.0" r="3.1" fill="#5a96f0"/>
<circle cx="1088.7" cy="377.9" r="3.1" fill="#5a96f0"/>
<circle cx="1094.9" cy="379.5" r="3.1" fill="#5a96f0"/>
<circle cx="1101.1" cy="373.9" r="3.1" fill="#5a96f0"/>
<circle cx="1107.0" cy="378.5" r="3.1" fill="#5a96f0"/>
<circle cx="1113.3" cy="384.4" r="3.1" fill="#5a96f0"/>
<circle cx="1119.5" cy="387.7" r="3.1" fill="#5a96f0"/>
<circle cx="1125.7" cy="388.4" r="3.1" fill="#5a96f0"/>
<circle cx="1132.0" cy="386.1" r="3.1" fill="#5a96f0"/>
<circle cx="1138.2" cy="381.1" r="3.1" fill="#5a96f0"/>
<circle cx="1144.1" cy="376.9" r="3.1" fill="#5a96f0"/>
<circle cx="1150.4" cy="375.2" r="3.1" fill="#5a96f0"/>
<circle cx="1156.6" cy="384.4" r="3.1" fill="#5a96f0"/>
<circle cx="1162.8" cy="394.9" r="3.1" fill="#5a96f0"/>
<circle cx="1169.1" cy="387.7" r="3.1" fill="#5a96f0"/>
<circle cx="1175.3" cy="372.9" r="3.1" fill="#5a96f0"/>
<circle cx="1181.5" cy="377.9" r="3.1" fill="#5a96f0"/>
<circle cx="1187.4" cy="389.3" r="3.1" fill="#5a96f0"/>
<circle cx="1193.7" cy="390.0" r="3.1" fill="#5a96f0"/>
<circle cx="1199.9" cy="395.9" r="3.1" fill="#5a96f0"/>
<circle cx="1206.1" cy="407.4" r="3.1" fill="#5a96f0"/>
<circle cx="1212.4" cy="411.7" r="3.1" fill="#5a96f0"/>
<circle cx="1218.6" cy="405.1" r="3.1" fill="#5a96f0"/>
<circle cx="1224.8" cy="395.9" r="3.1" fill="#5a96f0"/>
<circle cx="1231.1" cy="394.9" r="3.1" fill="#5a96f0"/>
<circle cx="1237.3" cy="402.5" r="3.1" fill="#5a96f0"/>
<circle cx="1243.2" cy="401.5" r="3.1" fill="#5a96f0"/>
<circle cx="1249.4" cy="382.8" r="3.1" fill="#5a96f0"/>
<circle cx="1255.7" cy="370.6" r="3.1" fill="#5a96f0"/>
<circle cx="1261.9" cy="368.7" r="3.1" fill="#5a96f0"/>
<circle cx="1268.1" cy="364.1" r="3.1" fill="#5a96f0"/>
<circle cx="1274.0" cy="361.5" r="3.1" fill="#5a96f0"/>
<circle cx="1280.3" cy="361.5" r="3.1" fill="#5a96f0"/>
<circle cx="1286.5" cy="357.5" r="3.1" fill="#5a96f0"/>
<circle cx="1292.4" cy="359.8" r="3.1" fill="#5a96f0"/>
<circle cx="1299.0" cy="368.7" r="3.1" fill="#5a96f0"/>
<circle cx="1305.2" cy="366.4" r="3.1" fill="#5a96f0"/>
<circle cx="1311.1" cy="364.1" r="3.1" fill="#5a96f0"/>
<circle cx="1317.3" cy="359.8" r="3.1" fill="#5a96f0"/>
<circle cx="1323.6" cy="352.3" r="3.1" fill="#5a96f0"/>
<circle cx="1329.8" cy="364.1" r="3.1" fill="#5a96f0"/>
<circle cx="1335.7" cy="375.6" r="3.1" fill="#5a96f0"/>
<circle cx="1342.0" cy="380.5" r="3.1" fill="#5a96f0"/>
<circle cx="1348.2" cy="379.5" r="3.1" fill="#5a96f0"/>
<circle cx="1354.4" cy="375.6" r="3.1" fill="#5a96f0"/>
<circle cx="1360.7" cy="373.9" r="3.1" fill="#5a96f0"/>
<circle cx="1366.9" cy="372.9" r="3.1" fill="#5a96f0"/>
<circle cx="1372.8" cy="373.9" r="3.1" fill="#5a96f0"/>
<circle cx="1379.0" cy="372.9" r="3.1" fill="#5a96f0"/>
<circle cx="1385.3" cy="382.8" r="3.1" fill="#5a96f0"/>
<circle cx="1391.5" cy="390.0" r="3.1" fill="#5a96f0"/>
<circle cx="1397.7" cy="385.1" r="3.1" fill="#5a96f0"/>
<circle cx="1404.0" cy="376.2" r="3.1" fill="#5a96f0"/>
<circle cx="1410.2" cy="377.9" r="3.1" fill="#5a96f0"/>
<circle cx="1416.4" cy="386.1" r="3.1" fill="#5a96f0"/>
<circle cx="1422.3" cy="380.5" r="3.1" fill="#5a96f0"/>
<circle cx="1428.6" cy="376.2" r="3.1" fill="#5a96f0"/>
<circle cx="1434.8" cy="378.5" r="3.1" fill="#5a96f0"/>
<circle cx="1441.0" cy="381.8" r="3.1" fill="#5a96f0"/>
<circle cx="1447.3" cy="383.4" r="3.1" fill="#5a96f0"/>
<circle cx="1453.5" cy="385.4" r="3.1" fill="#5a96f0"/>
<circle cx="1459.7" cy="379.5" r="3.1" fill="#5a96f0"/>
<circle cx="1466.0" cy="378.5" r="3.1" fill="#5a96f0"/>
<circle cx="1471.9" cy="378.5" r="3.1" fill="#5a96f0"/>
<circle cx="1478.1" cy="376.2" r="3.1" fill="#5a96f0"/>
<circle cx="1484.3" cy="383.4" r="3.1" fill="#5a96f0"/>
<circle cx="1490.6" cy="373.9" r="3.1" fill="#5a96f0"/>
<circle cx="1496.8" cy="366.4" r="3.1" fill="#5a96f0"/>
<circle cx="1503.0" cy="372.9" r="3.1" fill="#5a96f0"/>
<circle cx="1509.3" cy="372.9" r="3.1" fill="#5a96f0"/>
<circle cx="1515.5" cy="377.9" r="3.1" fill="#5a96f0"/>
<circle cx="1521.4" cy="375.2" r="3.1" fill="#5a96f0"/>
<circle cx="1527.7" cy="376.9" r="3.1" fill="#5a96f0"/>
<circle cx="1533.9" cy="386.7" r="3.1" fill="#5a96f0"/>
<circle cx="1540.1" cy="386.1" r="3.1" fill="#5a96f0"/>
<circle cx="1546.4" cy="379.5" r="3.1" fill="#5a96f0"/>
<circle cx="1552.6" cy="375.6" r="3.1" fill="#5a96f0"/>
<circle cx="1558.8" cy="376.2" r="3.1" fill="#5a96f0"/>
<circle cx="1565.1" cy="379.5" r="3.1" fill="#5a96f0"/>
<circle cx="1571.3" cy="385.1" r="3.1" fill="#5a96f0"/>
<circle cx="1577.2" cy="382.8" r="3.1" fill="#5a96f0"/>
<circle cx="1583.4" cy="379.5" r="3.1" fill="#5a96f0"/>
<circle cx="1589.7" cy="381.1" r="3.1" fill="#5a96f0"/>
<circle cx="1595.9" cy="385.1" r="3.1" fill="#5a96f0"/>
<circle cx="1602.1" cy="387.7" r="3.1" fill="#5a96f0"/>
<circle cx="1608.0" cy="383.4" r="3.1" fill="#5a96f0"/>
<circle cx="1614.3" cy="379.5" r="3.1" fill="#5a96f0"/>
<circle cx="1620.5" cy="385.1" r="3.1" fill="#5a96f0"/>
<circle cx="1626.7" cy="385.4" r="3.1" fill="#5a96f0"/>
<circle cx="1633.0" cy="377.9" r="3.1" fill="#5a96f0"/>
<circle cx="1639.2" cy="376.2" r="3.1" fill="#5a96f0"/>
<circle cx="1645.1" cy="381.1" r="3.1" fill="#5a96f0"/>
<circle cx="1651.3" cy="388.4" r="3.1" fill="#5a96f0"/>
<rect x="894.4" y="508" width="21.4" height="6.4" rx="3.2" fill="#5794f2"/>
<text x="937.0" y="515.6" font-size="19.8" fill="#ccccdc" text-anchor="start" font-weight="normal" textLength="51.5" lengthAdjust="spacingAndGlyphs" stroke="#ccccdc" stroke-width="0.3" >logins</text>
<rect x="1013.5" y="508" width="21.4" height="6.4" rx="3.2" fill="#c586e6"/>
<text x="1056.2" y="515.6" font-size="19.8" fill="#ccccdc" text-anchor="start" font-weight="normal" textLength="132.5" lengthAdjust="spacingAndGlyphs" stroke="#ccccdc" stroke-width="0.3" >logins (-1 hour)</text>
<rect x="1707.5" y="147.3" width="407.0" height="218.2" rx="3" fill="#181b1f" stroke="rgba(204,204,220,0.09)" stroke-width="2"/>
<text x="1720.8" y="180.3" font-size="24" fill="#ccccdc" text-anchor="start" font-weight="normal" textLength="84" lengthAdjust="spacingAndGlyphs" stroke="#ccccdc" stroke-width="1.008" >Memory</text>
<path d="M1819.57,344.07 A96.14999999999999,96.14999999999999 0 0 1 1967.00,235.45" fill="none" stroke="#67a655" stroke-width="4.0"/>
<path d="M1967.00,235.45 A96.14999999999999,96.14999999999999 0 0 1 2006.71,308.17" fill="none" stroke="#e27d28" stroke-width="4.0"/>
<path d="M2006.71,308.17 A96.14999999999999,96.14999999999999 0 0 1 2001.83,344.07" fill="none" stroke="#e6322d" stroke-width="4.0"/>
<path d="M1835.78,338.61 A79.05,79.05 0 1 1 1985.62,338.61" fill="none" stroke="#232429" stroke-width="26.9"/>
<path d="M1835.78,338.61 A79.05,79.05 0 0 1 1876.51,242.13" fill="none" stroke="#67a355" stroke-width="26.9"/>
<text x="1910.7" y="336.4" font-size="37.4" fill="#67a355" text-anchor="middle" font-weight="normal" textLength="84.5" lengthAdjust="spacingAndGlyphs" stroke="#67a355" stroke-width="1.1219999999999999" >114 B</text>
<rect x="2128.1" y="147.3" width="407.0" height="218.2" rx="3" fill="#181b1f" stroke="rgba(204,204,220,0.09)" stroke-width="2"/>
<text x="2141.0" y="180.3" font-size="24" fill="#ccccdc" text-anchor="start" font-weight="normal" textLength="117.3" lengthAdjust="spacingAndGlyphs" stroke="#ccccdc" stroke-width="1.008" >Google hits</text>
<path d="M2244.83,338.47 A91.44999999999999,91.44999999999999 0 0 1 2385.04,235.16" fill="none" stroke="#67a655" stroke-width="4.0"/>
<path d="M2385.04,235.16 A91.44999999999999,91.44999999999999 0 0 1 2422.81,304.32" fill="none" stroke="#e27d28" stroke-width="4.0"/>
<path d="M2422.81,304.32 A91.44999999999999,91.44999999999999 0 0 1 2418.17,338.47" fill="none" stroke="#e6322d" stroke-width="4.0"/>
<path d="M2261.03,333.01 A74.35,74.35 0 1 1 2401.97,333.01" fill="none" stroke="#232429" stroke-width="26.9"/>
<path d="M2261.03,333.01 A74.35,74.35 0 0 1 2263.45,279.35" fill="none" stroke="#67a355" stroke-width="26.9"/>
<text x="2330.6" y="338.1" font-size="48.8" fill="#67a355" text-anchor="middle" font-weight="normal" textLength="72" lengthAdjust="spacingAndGlyphs" stroke="#67a355" stroke-width="1.464" >57.1</text>
<rect x="1707.5" y="378.8" width="407.0" height="160.3" rx="3" fill="#181b1f" stroke="rgba(204,204,220,0.09)" stroke-width="2"/>
<text x="1720.8" y="411.6" font-size="24" fill="#ccccdc" text-anchor="start" font-weight="normal" textLength="136" lengthAdjust="spacingAndGlyphs" stroke="#ccccdc" stroke-width="1.008" >Support calls</text>
<path d="M1709.9,502.0 L1714.2,503.3 L1718.9,500.1 L1727.7,509.2 L1732.4,505.2 L1736.7,483.2 L1741.2,508.0 L1746.0,500.4 L1750.7,502.8 L1754.7,508.0 L1759.5,502.0 L1764.2,506.5 L1768.2,495.6 L1777.0,510.7 L1780.9,501.2 L1786.5,508.4 L1790.8,494.1 L1795.2,507.6 L1800.0,515.8 L1808.7,500.1 L1817.5,517.6 L1822.3,513.1 L1826.6,502.3 L1831.0,512.8 L1835.8,516.0 L1840.5,505.2 L1844.5,503.6 L1849.3,497.6 L1854.1,498.3 L1858.0,502.3 L1863.6,499.6 L1868.4,499.1 L1872.3,500.4 L1876.3,509.2 L1881.1,498.0 L1885.9,507.6 L1889.8,508.7 L1894.6,499.6 L1898.6,507.6 L1904.1,496.4 L1910.5,495.6 L1920.8,503.6 L1931.2,495.3 L1935.9,494.8 L1939.9,506.0 L1945.5,490.9 L1956.6,504.4 L1962.2,499.6 L1966.1,504.4 L1971.7,514.7 L1975.7,509.2 L1980.4,523.0 L1988.4,501.2 L1993.2,513.4 L2002.7,507.1 L2011.5,537.0 L2016.2,528.2 L2020.2,483.7 L2025.0,489.6 L2028.9,489.6 L2033.7,500.4 L2038.5,491.7 L2042.5,509.2 L2047.2,496.4 L2051.2,509.2 L2056.0,502.5 L2060.7,508.0 L2065.5,508.4 L2070.3,509.3 L2074.2,504.4 L2079.0,509.2 L2083.0,511.5 L2087.8,500.4 L2092.5,517.9 L2096.5,517.9 L2101.3,504.9 L2106.0,507.6 L2110.5,510.3 L2110.5,537.5 L1709.9,537.5 Z" fill="rgba(224,48,47,0.22)"/>
<path d="M1709.9,502.0 L1714.2,503.3 L1718.9,500.1 L1727.7,509.2 L1732.4,505.2 L1736.7,483.2 L1741.2,508.0 L1746.0,500.4 L1750.7,502.8 L1754.7,508.0 L1759.5,502.0 L1764.2,506.5 L1768.2,495.6 L1777.0,510.7 L1780.9,501.2 L1786.5,508.4 L1790.8,494.1 L1795.2,507.6 L1800.0,515.8 L1808.7,500.1 L1817.5,517.6 L1822.3,513.1 L1826.6,502.3 L1831.0,512.8 L1835.8,516.0 L1840.5,505.2 L1844.5,503.6 L1849.3,497.6 L1854.1,498.3 L1858.0,502.3 L1863.6,499.6 L1868.4,499.1 L1872.3,500.4 L1876.3,509.2 L1881.1,498.0 L1885.9,507.6 L1889.8,508.7 L1894.6,499.6 L1898.6,507.6 L1904.1,496.4 L1910.5,495.6 L1920.8,503.6 L1931.2,495.3 L1935.9,494.8 L1939.9,506.0 L1945.5,490.9 L1956.6,504.4 L1962.2,499.6 L1966.1,504.4 L1971.7,514.7 L1975.7,509.2 L1980.4,523.0 L1988.4,501.2 L1993.2,513.4 L2002.7,507.1 L2011.5,537.0 L2016.2,528.2 L2020.2,483.7 L2025.0,489.6 L2028.9,489.6 L2033.7,500.4 L2038.5,491.7 L2042.5,509.2 L2047.2,496.4 L2051.2,509.2 L2056.0,502.5 L2060.7,508.0 L2065.5,508.4 L2070.3,509.3 L2074.2,504.4 L2079.0,509.2 L2083.0,511.5 L2087.8,500.4 L2092.5,517.9 L2096.5,517.9 L2101.3,504.9 L2106.0,507.6 L2110.5,510.3" fill="none" stroke="#e0302f" stroke-width="2.0" stroke-linejoin="round"/>
<text x="1910.8" y="495.6" font-size="38" fill="#e0302f" text-anchor="middle" font-weight="normal" textLength="74.3" lengthAdjust="spacingAndGlyphs" stroke="#e0302f" stroke-width="1.14" >84.9</text>
<rect x="2128.1" y="378.8" width="407.0" height="160.3" rx="3" fill="#181b1f" stroke="rgba(204,204,220,0.09)" stroke-width="2"/>
<text x="2141.0" y="411.6" font-size="24" fill="#ccccdc" text-anchor="start" font-weight="normal" textLength="88.7" lengthAdjust="spacingAndGlyphs" stroke="#ccccdc" stroke-width="1.008" >Sign ups</text>
<path d="M2130.2,517.8 L2139.4,505.3 L2148.5,513.0 L2157.3,498.6 L2162.1,504.5 L2170.8,499.3 L2174.8,510.1 L2179.6,506.1 L2184.4,523.2 L2188.8,509.0 L2193.1,505.3 L2197.4,515.4 L2201.9,510.1 L2206.7,505.3 L2211.1,498.2 L2216.2,512.5 L2220.2,512.5 L2225.0,514.1 L2229.3,507.3 L2234.1,512.0 L2237.8,512.5 L2243.0,520.8 L2247.3,503.4 L2251.8,520.0 L2256.1,514.1 L2260.9,504.5 L2265.6,498.2 L2269.9,495.0 L2274.4,510.1 L2278.4,500.2 L2283.2,508.8 L2288.0,501.4 L2292.7,506.6 L2297.2,517.0 L2305.5,506.1 L2310.3,511.7 L2315.0,506.9 L2319.8,509.8 L2324.6,507.7 L2329.4,506.1 L2337.4,504.5 L2341.8,511.2 L2346.9,507.7 L2350.9,495.0 L2355.7,505.3 L2360.0,508.5 L2364.5,502.6 L2369.2,507.7 L2374.0,508.2 L2378.3,511.2 L2382.8,502.9 L2387.6,506.9 L2391.5,515.7 L2396.3,508.5 L2400.6,519.7 L2405.1,518.4 L2409.1,518.4 L2413.9,505.3 L2418.6,514.9 L2422.9,513.6 L2427.4,537.2 L2432.2,530.4 L2437.0,532.4 L2440.5,495.8 L2445.2,483.3 L2449.7,490.2 L2454.5,498.6 L2458.8,494.5 L2463.3,517.8 L2468.0,510.1 L2472.0,513.0 L2476.8,513.6 L2481.6,508.2 L2490.3,514.6 L2495.1,517.3 L2499.6,509.3 L2503.9,510.9 L2508.7,503.4 L2513.0,521.0 L2517.4,512.5 L2522.2,510.1 L2527.0,516.2 L2531.5,508.2 L2531.5,537.5 L2130.2,537.5 Z" fill="rgba(55,170,50,0.2)"/>
<path d="M2130.2,517.8 L2139.4,505.3 L2148.5,513.0 L2157.3,498.6 L2162.1,504.5 L2170.8,499.3 L2174.8,510.1 L2179.6,506.1 L2184.4,523.2 L2188.8,509.0 L2193.1,505.3 L2197.4,515.4 L2201.9,510.1 L2206.7,505.3 L2211.1,498.2 L2216.2,512.5 L2220.2,512.5 L2225.0,514.1 L2229.3,507.3 L2234.1,512.0 L2237.8,512.5 L2243.0,520.8 L2247.3,503.4 L2251.8,520.0 L2256.1,514.1 L2260.9,504.5 L2265.6,498.2 L2269.9,495.0 L2274.4,510.1 L2278.4,500.2 L2283.2,508.8 L2288.0,501.4 L2292.7,506.6 L2297.2,517.0 L2305.5,506.1 L2310.3,511.7 L2315.0,506.9 L2319.8,509.8 L2324.6,507.7 L2329.4,506.1 L2337.4,504.5 L2341.8,511.2 L2346.9,507.7 L2350.9,495.0 L2355.7,505.3 L2360.0,508.5 L2364.5,502.6 L2369.2,507.7 L2374.0,508.2 L2378.3,511.2 L2382.8,502.9 L2387.6,506.9 L2391.5,515.7 L2396.3,508.5 L2400.6,519.7 L2405.1,518.4 L2409.1,518.4 L2413.9,505.3 L2418.6,514.9 L2422.9,513.6 L2427.4,537.2 L2432.2,530.4 L2437.0,532.4 L2440.5,495.8 L2445.2,483.3 L2449.7,490.2 L2454.5,498.6 L2458.8,494.5 L2463.3,517.8 L2468.0,510.1 L2472.0,513.0 L2476.8,513.6 L2481.6,508.2 L2490.3,514.6 L2495.1,517.3 L2499.6,509.3 L2503.9,510.9 L2508.7,503.4 L2513.0,521.0 L2517.4,512.5 L2522.2,510.1 L2527.0,516.2 L2531.5,508.2" fill="none" stroke="#37aa32" stroke-width="2.0" stroke-linejoin="round"/>
<text x="2331.4" y="496.1" font-size="38" fill="#37aa32" text-anchor="middle" font-weight="normal" textLength="64.6" lengthAdjust="spacingAndGlyphs" stroke="#37aa32" stroke-width="1.14" >283</text>
<rect x="25.1" y="552.4" width="1668.8" height="449.6" rx="3" fill="#181b1f" stroke="rgba(204,204,220,0.09)" stroke-width="2"/>
<text x="859.5" y="586.0" font-size="24" fill="#ccccdc" text-anchor="middle" font-weight="normal" textLength="159" lengthAdjust="spacingAndGlyphs" stroke="#ccccdc" stroke-width="1.008" >server requests</text>
<path d="M80.9,706.5 L90.7,693.8 L94.6,691.3 L98.5,692.4 L107.3,681.1 L112.2,684.0 L116.1,691.9 L123.9,691.3 L133.7,687.0 L137.6,680.1 L142.5,687.9 L146.4,710.5 L151.3,706.5 L155.2,695.8 L159.1,696.8 L164.0,704.6 L168.9,703.6 L172.8,698.7 L178.7,702.6 L186.5,700.7 L192.4,701.6 L198.3,705.6 L203.2,693.8 L208.1,689.3 L215.9,698.7 L225.7,693.2 L234.5,703.6 L243.3,699.1 L251.1,698.3 L257.0,691.3 L260.9,691.9 L266.8,698.7 L270.7,699.1 L277.5,691.9 L286.4,664.5 L295.2,698.7 L300.0,699.1 L304.9,688.5 L309.8,686.0 L317.7,691.9 L322.6,694.8 L329.4,695.8 L335.3,694.8 L343.1,688.9 L348.0,693.8 L351.9,706.5 L356.8,699.7 L360.7,687.9 L368.5,692.8 L374.4,693.8 L378.3,701.6 L386.2,702.2 L392.0,707.5 L395.9,708.5 L403.8,694.8 L409.6,692.8 L413.6,702.6 L422.4,693.8 L427.3,690.5 L435.1,700.7 L439.0,703.0 L446.8,698.3 L452.7,693.2 L458.6,691.9 L462.5,702.6 L466.4,706.5 L470.3,695.2 L478.8,696.8 L489.6,684.6 L499.4,689.9 L509.1,701.1 L520.9,705.6 L530.7,708.9 L540.5,700.3 L548.3,703.0 L558.1,698.3 L569.8,698.3 L579.6,690.5 L589.4,712.4 L599.2,702.2 L608.9,703.6 L622.6,712.0 L632.4,688.9 L640.3,703.6 L654.0,717.3 L663.7,710.5 L675.5,691.9 L689.2,698.3 L697.0,691.3 L702.9,695.2 L712.7,687.4 L724.4,689.9 L732.2,695.8 L745.9,696.8 L757.7,688.5 L767.5,694.4 L777.2,691.3 L781.2,695.8 L790.0,685.4 L798.8,697.7 L806.6,689.9 L820.3,692.8 L829.1,708.1 L837.9,703.6 L845.7,698.3 L853.6,700.7 L863.3,694.8 L867.3,701.6 L868.9,701.1 L876.7,692.4 L881.6,696.4 L890.4,691.3 L899.2,686.6 L908.1,695.8 L915.9,692.8 L924.7,696.8 L929.6,686.0 L934.5,691.9 L942.3,685.4 L947.2,691.3 L957.0,685.0 L964.8,699.7 L968.7,689.9 L982.4,687.0 L990.2,692.8 L996.1,692.4 L1003.9,700.7 L1009.8,692.8 L1021.6,692.8 L1031.3,681.1 L1043.1,683.4 L1048.0,678.7 L1057.8,691.3 L1069.5,701.1 L1082.2,687.0 L1094.0,691.3 L1105.7,688.9 L1109.6,695.8 L1118.4,686.6 L1123.3,697.7 L1135.1,688.9 L1144.8,696.8 L1152.7,682.7 L1160.5,702.2 L1170.3,709.5 L1180.1,687.0 L1195.7,712.8 L1207.5,703.6 L1217.3,696.4 L1223.1,705.6 L1232.9,705.0 L1240.7,703.0 L1250.5,691.9 L1258.3,702.6 L1262.3,703.6 L1265.9,695.8 L1270.8,691.9 L1279.6,707.5 L1289.4,704.6 L1297.2,696.8 L1306.0,713.4 L1309.9,709.5 L1318.7,691.3 L1324.6,705.6 L1336.3,740.8 L1341.2,748.6 L1350.0,736.9 L1353.9,730.0 L1362.7,735.5 L1371.5,704.6 L1379.4,673.3 L1385.2,667.4 L1391.1,671.7 L1398.9,668.4 L1410.7,668.0 L1420.5,670.3 L1428.3,674.2 L1437.1,701.1 L1444.0,685.0 L1450.8,677.2 L1457.7,686.0 L1471.4,708.9 L1475.3,710.5 L1481.1,699.1 L1487.0,697.7 L1492.9,695.8 L1498.7,694.8 L1512.4,706.9 L1520.3,703.6 L1530.1,698.7 L1537.9,703.0 L1541.8,699.1 L1549.6,688.9 L1559.4,702.6 L1563.3,700.7 L1573.1,706.9 L1580.9,697.7 L1590.7,696.8 L1596.6,708.9 L1604.4,698.7 L1618.1,707.5 L1625.0,698.3 L1633.8,706.9 L1641.6,690.5 L1651.0,698.3 L1651.0,911.1 L80.9,911.1 Z" fill="#16304e"/>
<path d="M80.9,758.4 L90.7,748.6 L98.5,748.6 L107.3,738.4 L112.2,739.8 L116.1,746.7 L121.0,747.6 L128.8,744.7 L133.7,748.6 L137.6,741.8 L142.5,747.6 L146.4,765.2 L155.2,746.1 L164.0,756.4 L172.8,751.9 L177.7,757.0 L184.6,755.5 L192.4,754.5 L198.3,753.1 L203.2,746.7 L208.1,747.2 L212.0,751.9 L221.8,748.0 L225.7,749.6 L234.5,756.4 L243.3,754.5 L247.2,755.5 L257.0,745.7 L265.8,751.5 L277.5,749.6 L286.4,721.2 L295.2,756.4 L300.0,751.5 L307.9,738.8 L312.8,741.8 L317.7,747.6 L329.4,750.6 L337.2,744.1 L343.1,744.7 L351.9,760.4 L356.8,755.5 L360.7,745.7 L364.6,745.7 L378.3,753.5 L386.2,754.5 L392.0,761.3 L395.9,761.3 L403.8,744.7 L408.7,744.7 L413.6,756.4 L417.5,755.1 L422.4,742.7 L427.3,745.7 L435.1,755.5 L442.9,751.2 L450.7,748.0 L456.6,747.2 L462.5,755.5 L466.4,758.4 L470.3,745.7 L478.8,757.0 L489.6,738.8 L497.4,746.7 L509.1,756.4 L520.9,757.8 L530.7,762.3 L540.5,750.0 L548.3,758.4 L558.1,747.2 L575.7,751.9 L589.4,766.2 L601.1,753.5 L614.8,758.4 L620.7,766.2 L632.4,740.2 L640.3,755.5 L654.0,768.2 L663.7,760.4 L675.5,741.4 L685.3,754.5 L694.1,743.7 L702.9,752.5 L711.7,742.7 L724.4,745.7 L732.2,749.6 L744.0,749.6 L757.7,745.7 L767.5,753.1 L773.3,747.2 L781.2,750.6 L790.0,740.8 L798.8,751.9 L806.6,740.8 L820.3,751.5 L828.1,764.3 L837.9,753.1 L847.7,753.1 L855.5,755.1 L863.3,745.7 L867.3,755.5 L868.9,755.9 L876.7,745.3 L884.6,751.9 L890.4,746.7 L899.2,743.7 L908.1,751.5 L915.9,748.6 L924.7,748.6 L929.6,741.4 L934.5,750.6 L942.3,739.8 L947.2,746.7 L958.9,744.7 L964.8,753.1 L972.6,743.7 L982.4,743.7 L990.2,751.9 L996.1,747.2 L1003.9,756.4 L1013.7,741.8 L1021.6,747.6 L1031.3,736.9 L1039.2,738.8 L1048.0,736.9 L1053.8,746.7 L1060.7,745.7 L1069.5,755.5 L1082.2,740.2 L1094.0,746.7 L1099.8,743.3 L1109.6,751.5 L1119.4,741.8 L1123.3,755.1 L1135.1,743.7 L1142.9,753.5 L1152.7,737.8 L1160.5,756.4 L1170.3,759.0 L1178.1,739.4 L1187.9,752.5 L1197.7,765.2 L1213.3,747.2 L1223.1,760.9 L1232.9,757.4 L1239.8,760.9 L1248.6,748.6 L1258.3,757.0 L1262.3,751.5 L1265.9,750.0 L1270.8,749.2 L1279.6,760.9 L1297.2,750.0 L1306.0,768.2 L1309.9,766.8 L1314.8,747.6 L1319.7,746.7 L1324.6,759.8 L1337.3,786.8 L1341.2,789.7 L1350.0,782.5 L1353.9,774.6 L1362.7,785.8 L1371.5,756.4 L1381.3,731.0 L1385.2,727.1 L1391.1,731.6 L1398.9,729.0 L1406.8,730.0 L1412.6,728.1 L1420.5,729.0 L1428.3,735.9 L1432.2,747.2 L1437.1,753.1 L1444.0,739.8 L1450.8,733.5 L1455.7,736.9 L1467.4,757.0 L1473.3,759.8 L1481.1,750.6 L1489.0,756.4 L1494.8,748.0 L1502.7,753.5 L1512.4,759.8 L1522.2,752.5 L1530.1,748.6 L1537.9,752.5 L1541.8,746.1 L1547.7,745.7 L1555.5,753.1 L1563.3,751.9 L1569.2,759.8 L1577.0,753.9 L1586.8,744.7 L1592.7,747.2 L1596.6,760.4 L1600.5,763.3 L1604.4,753.9 L1612.3,751.5 L1618.1,759.8 L1625.9,755.1 L1633.8,757.8 L1642.6,745.7 L1651.0,753.1 L1651.0,911.1 L80.9,911.1 Z" fill="#215485"/>
<path d="M80.9,809.3 L86.7,806.3 L92.6,801.4 L104.4,796.6 L110.2,797.5 L121.0,804.4 L128.8,801.4 L133.7,802.8 L137.6,800.5 L142.5,805.4 L146.4,813.2 L151.3,804.4 L155.2,802.0 L160.1,806.7 L168.0,804.4 L178.7,811.2 L184.6,810.6 L192.4,808.3 L203.2,802.0 L215.9,803.4 L223.7,802.4 L230.6,807.9 L237.4,805.9 L247.2,808.3 L256.0,797.5 L264.8,804.4 L270.7,802.8 L277.5,803.4 L286.4,789.1 L295.2,806.3 L300.0,804.4 L307.9,793.0 L312.8,795.6 L319.6,804.4 L325.5,806.7 L333.3,798.9 L339.2,798.9 L347.0,803.4 L351.9,809.3 L356.8,807.3 L364.6,799.5 L374.4,804.8 L382.2,805.9 L392.0,813.2 L395.9,813.2 L404.7,800.1 L413.6,812.2 L422.4,797.5 L433.1,804.8 L440.9,806.3 L450.7,803.4 L458.6,803.4 L462.5,807.3 L466.4,807.9 L470.3,797.5 L478.8,807.9 L487.6,796.9 L497.4,802.0 L509.1,806.7 L520.9,807.9 L530.7,811.8 L540.5,802.0 L548.3,810.3 L558.1,803.4 L575.7,804.4 L589.4,813.8 L601.1,804.4 L614.8,813.2 L622.6,811.2 L632.4,794.6 L640.3,808.3 L654.0,816.1 L663.7,810.3 L675.5,798.1 L685.3,804.4 L694.1,796.6 L702.9,804.8 L711.7,798.5 L724.4,801.4 L732.2,805.4 L744.0,806.3 L749.8,799.5 L757.7,799.5 L767.5,807.3 L773.3,802.0 L781.2,804.8 L790.0,795.0 L798.8,807.9 L806.6,796.2 L820.3,805.4 L828.1,814.2 L837.9,808.7 L847.7,809.3 L859.4,801.4 L867.3,806.3 L868.9,802.4 L876.7,799.5 L881.6,805.9 L890.4,799.5 L899.2,800.5 L907.1,803.4 L915.9,800.9 L924.7,807.3 L929.6,800.5 L934.5,804.4 L942.3,796.6 L947.2,801.4 L958.9,800.5 L964.8,810.6 L972.6,797.5 L982.4,799.5 L990.2,807.3 L996.1,802.4 L1003.9,807.9 L1013.7,797.5 L1021.6,802.0 L1031.3,792.3 L1039.2,796.9 L1048.0,795.6 L1053.8,802.0 L1060.7,800.1 L1065.6,806.3 L1074.4,802.0 L1084.2,798.9 L1092.0,804.0 L1101.8,800.5 L1109.6,805.4 L1118.4,796.2 L1123.3,808.3 L1127.2,810.3 L1135.1,800.5 L1142.9,803.4 L1152.7,796.6 L1160.5,807.9 L1170.3,808.7 L1180.1,796.9 L1191.8,813.2 L1203.6,810.6 L1213.3,802.4 L1223.1,807.3 L1232.9,805.9 L1239.8,808.7 L1248.6,799.5 L1258.3,809.3 L1262.3,807.3 L1264.9,806.3 L1269.8,804.4 L1279.6,811.2 L1289.4,807.3 L1297.2,801.4 L1306.0,818.5 L1309.9,816.1 L1314.8,801.4 L1319.7,801.4 L1324.6,813.8 L1337.3,829.8 L1341.2,830.8 L1353.0,817.1 L1362.7,826.3 L1371.5,806.3 L1377.4,799.5 L1385.2,788.7 L1391.1,790.7 L1397.0,785.8 L1404.8,789.7 L1412.6,787.2 L1419.5,787.2 L1428.3,794.6 L1432.2,801.4 L1437.1,804.4 L1443.0,798.9 L1449.8,793.6 L1459.6,800.9 L1467.4,811.8 L1471.4,812.6 L1477.2,807.9 L1481.1,805.4 L1487.0,809.9 L1492.9,803.4 L1502.7,807.9 L1512.4,808.7 L1520.3,805.9 L1528.1,805.4 L1535.9,805.9 L1541.8,797.5 L1547.7,798.5 L1555.5,804.4 L1563.3,804.0 L1569.2,811.2 L1577.0,805.4 L1586.8,802.4 L1592.7,803.4 L1596.6,813.2 L1604.4,804.4 L1616.2,812.2 L1625.9,805.4 L1633.8,807.3 L1642.6,800.1 L1651.0,808.3 L1651.0,911.1 L80.9,911.1 Z" fill="#3c6187"/>
<path d="M80.9,859.2 L94.6,852.3 L100.4,855.3 L107.3,852.3 L116.1,858.2 L125.9,855.3 L137.6,856.2 L142.5,860.7 L146.4,860.7 L151.3,856.2 L155.2,857.2 L160.1,860.7 L168.0,851.4 L172.8,858.2 L181.7,858.2 L190.5,859.2 L203.2,856.8 L215.9,856.2 L225.7,858.2 L229.6,861.1 L238.4,856.8 L247.2,859.2 L256.0,851.4 L260.9,855.3 L268.7,856.2 L274.6,855.3 L282.4,849.4 L292.2,857.2 L300.0,860.2 L307.9,852.3 L315.7,856.8 L322.6,856.2 L329.4,858.2 L335.3,856.2 L341.1,858.2 L348.0,857.2 L351.9,861.1 L356.8,858.8 L362.7,854.3 L368.5,853.3 L374.4,859.6 L382.2,855.3 L392.0,862.1 L399.9,860.7 L405.7,855.7 L414.5,859.2 L423.3,855.7 L427.3,858.8 L435.1,855.3 L439.0,859.6 L448.8,855.3 L458.6,860.2 L468.3,854.9 L478.8,860.2 L487.6,855.3 L497.4,859.2 L502.3,857.2 L517.0,860.2 L527.7,864.1 L536.5,856.2 L544.4,859.2 L552.2,856.8 L562.0,859.2 L579.6,857.6 L588.4,863.1 L597.2,857.6 L607.0,860.2 L614.8,862.7 L622.6,860.2 L632.4,853.3 L644.2,862.1 L654.0,864.7 L663.7,859.2 L675.5,853.7 L685.3,859.2 L694.1,852.9 L702.9,859.2 L714.6,856.2 L724.4,860.7 L736.1,857.6 L745.9,859.6 L753.8,854.3 L763.5,860.7 L771.4,855.3 L785.1,853.7 L792.9,861.1 L804.6,853.3 L820.3,861.1 L835.9,862.7 L843.8,859.6 L853.6,856.2 L867.3,856.8 L868.9,854.3 L880.7,858.8 L885.5,852.3 L894.4,856.2 L899.2,853.7 L910.0,857.2 L917.8,854.9 L923.7,855.7 L929.6,860.2 L934.5,860.2 L942.3,850.4 L947.2,855.3 L958.9,854.3 L964.8,863.1 L970.7,859.2 L982.4,853.3 L990.2,861.1 L996.1,856.2 L1003.9,859.2 L1011.8,851.7 L1019.6,856.2 L1025.5,853.7 L1033.3,854.3 L1043.1,851.4 L1052.9,855.3 L1060.7,852.9 L1069.5,861.1 L1074.4,857.6 L1086.1,855.3 L1092.0,856.8 L1099.8,854.9 L1109.6,859.2 L1117.4,854.3 L1121.4,861.1 L1135.1,851.7 L1144.8,857.6 L1154.6,854.9 L1162.5,860.7 L1170.3,861.1 L1178.1,852.3 L1187.9,860.2 L1205.5,862.1 L1213.3,857.2 L1223.1,858.2 L1230.9,853.3 L1240.7,856.2 L1248.6,851.7 L1256.4,857.6 L1262.3,856.2 L1264.9,857.6 L1269.8,859.2 L1279.6,862.1 L1285.4,861.5 L1295.2,856.2 L1306.0,865.4 L1310.9,862.7 L1314.8,855.3 L1319.7,857.2 L1324.6,862.7 L1330.5,865.0 L1336.3,871.9 L1340.2,873.9 L1350.0,866.6 L1353.9,867.0 L1358.8,869.9 L1362.7,869.0 L1371.5,854.3 L1377.4,852.3 L1385.2,849.0 L1393.1,847.4 L1400.9,852.3 L1412.6,849.4 L1419.5,844.5 L1428.3,855.3 L1434.2,858.2 L1444.0,856.2 L1459.6,855.3 L1467.4,863.1 L1475.3,856.2 L1485.0,861.1 L1492.9,856.8 L1510.5,861.5 L1516.4,858.2 L1526.1,857.2 L1534.0,860.7 L1541.8,851.7 L1547.7,855.3 L1553.5,855.7 L1557.5,856.8 L1565.3,856.2 L1569.2,862.1 L1579.0,856.8 L1588.8,857.2 L1594.6,860.7 L1602.5,858.2 L1618.1,862.1 L1625.9,858.2 L1633.8,861.5 L1641.6,856.2 L1651.0,862.1 L1651.0,911.1 L80.9,911.1 Z" fill="#7a909c"/>
<path d="M80.9,706.5 L90.7,693.8 L94.6,691.3 L98.5,692.4 L107.3,681.1 L112.2,684.0 L116.1,691.9 L123.9,691.3 L133.7,687.0 L137.6,680.1 L142.5,687.9 L146.4,710.5 L151.3,706.5 L155.2,695.8 L159.1,696.8 L164.0,704.6 L168.9,703.6 L172.8,698.7 L178.7,702.6 L186.5,700.7 L192.4,701.6 L198.3,705.6 L203.2,693.8 L208.1,689.3 L215.9,698.7 L225.7,693.2 L234.5,703.6 L243.3,699.1 L251.1,698.3 L257.0,691.3 L260.9,691.9 L266.8,698.7 L270.7,699.1 L277.5,691.9 L286.4,664.5 L295.2,698.7 L300.0,699.1 L304.9,688.5 L309.8,686.0 L317.7,691.9 L322.6,694.8 L329.4,695.8 L335.3,694.8 L343.1,688.9 L348.0,693.8 L351.9,706.5 L356.8,699.7 L360.7,687.9 L368.5,692.8 L374.4,693.8 L378.3,701.6 L386.2,702.2 L392.0,707.5 L395.9,708.5 L403.8,694.8 L409.6,692.8 L413.6,702.6 L422.4,693.8 L427.3,690.5 L435.1,700.7 L439.0,703.0 L446.8,698.3 L452.7,693.2 L458.6,691.9 L462.5,702.6 L466.4,706.5 L470.3,695.2 L478.8,696.8 L489.6,684.6 L499.4,689.9 L509.1,701.1 L520.9,705.6 L530.7,708.9 L540.5,700.3 L548.3,703.0 L558.1,698.3 L569.8,698.3 L579.6,690.5 L589.4,712.4 L599.2,702.2 L608.9,703.6 L622.6,712.0 L632.4,688.9 L640.3,703.6 L654.0,717.3 L663.7,710.5 L675.5,691.9 L689.2,698.3 L697.0,691.3 L702.9,695.2 L712.7,687.4 L724.4,689.9 L732.2,695.8 L745.9,696.8 L757.7,688.5 L767.5,694.4 L777.2,691.3 L781.2,695.8 L790.0,685.4 L798.8,697.7 L806.6,689.9 L820.3,692.8 L829.1,708.1 L837.9,703.6 L845.7,698.3 L853.6,700.7 L863.3,694.8 L867.3,701.6 L868.9,701.1 L876.7,692.4 L881.6,696.4 L890.4,691.3 L899.2,686.6 L908.1,695.8 L915.9,692.8 L924.7,696.8 L929.6,686.0 L934.5,691.9 L942.3,685.4 L947.2,691.3 L957.0,685.0 L964.8,699.7 L968.7,689.9 L982.4,687.0 L990.2,692.8 L996.1,692.4 L1003.9,700.7 L1009.8,692.8 L1021.6,692.8 L1031.3,681.1 L1043.1,683.4 L1048.0,678.7 L1057.8,691.3 L1069.5,701.1 L1082.2,687.0 L1094.0,691.3 L1105.7,688.9 L1109.6,695.8 L1118.4,686.6 L1123.3,697.7 L1135.1,688.9 L1144.8,696.8 L1152.7,682.7 L1160.5,702.2 L1170.3,709.5 L1180.1,687.0 L1195.7,712.8 L1207.5,703.6 L1217.3,696.4 L1223.1,705.6 L1232.9,705.0 L1240.7,703.0 L1250.5,691.9 L1258.3,702.6 L1262.3,703.6 L1265.9,695.8 L1270.8,691.9 L1279.6,707.5 L1289.4,704.6 L1297.2,696.8 L1306.0,713.4 L1309.9,709.5 L1318.7,691.3 L1324.6,705.6 L1336.3,740.8 L1341.2,748.6 L1350.0,736.9 L1353.9,730.0 L1362.7,735.5 L1371.5,704.6 L1379.4,673.3 L1385.2,667.4 L1391.1,671.7 L1398.9,668.4 L1410.7,668.0 L1420.5,670.3 L1428.3,674.2 L1437.1,701.1 L1444.0,685.0 L1450.8,677.2 L1457.7,686.0 L1471.4,708.9 L1475.3,710.5 L1481.1,699.1 L1487.0,697.7 L1492.9,695.8 L1498.7,694.8 L1512.4,706.9 L1520.3,703.6 L1530.1,698.7 L1537.9,703.0 L1541.8,699.1 L1549.6,688.9 L1559.4,702.6 L1563.3,700.7 L1573.1,706.9 L1580.9,697.7 L1590.7,696.8 L1596.6,708.9 L1604.4,698.7 L1618.1,707.5 L1625.0,698.3 L1633.8,706.9 L1641.6,690.5 L1651.0,698.3" fill="none" stroke="#16508c" stroke-width="1.7" stroke-linejoin="round"/>
<path d="M80.9,758.4 L90.7,748.6 L98.5,748.6 L107.3,738.4 L112.2,739.8 L116.1,746.7 L121.0,747.6 L128.8,744.7 L133.7,748.6 L137.6,741.8 L142.5,747.6 L146.4,765.2 L155.2,746.1 L164.0,756.4 L172.8,751.9 L177.7,757.0 L184.6,755.5 L192.4,754.5 L198.3,753.1 L203.2,746.7 L208.1,747.2 L212.0,751.9 L221.8,748.0 L225.7,749.6 L234.5,756.4 L243.3,754.5 L247.2,755.5 L257.0,745.7 L265.8,751.5 L277.5,749.6 L286.4,721.2 L295.2,756.4 L300.0,751.5 L307.9,738.8 L312.8,741.8 L317.7,747.6 L329.4,750.6 L337.2,744.1 L343.1,744.7 L351.9,760.4 L356.8,755.5 L360.7,745.7 L364.6,745.7 L378.3,753.5 L386.2,754.5 L392.0,761.3 L395.9,761.3 L403.8,744.7 L408.7,744.7 L413.6,756.4 L417.5,755.1 L422.4,742.7 L427.3,745.7 L435.1,755.5 L442.9,751.2 L450.7,748.0 L456.6,747.2 L462.5,755.5 L466.4,758.4 L470.3,745.7 L478.8,757.0 L489.6,738.8 L497.4,746.7 L509.1,756.4 L520.9,757.8 L530.7,762.3 L540.5,750.0 L548.3,758.4 L558.1,747.2 L575.7,751.9 L589.4,766.2 L601.1,753.5 L614.8,758.4 L620.7,766.2 L632.4,740.2 L640.3,755.5 L654.0,768.2 L663.7,760.4 L675.5,741.4 L685.3,754.5 L694.1,743.7 L702.9,752.5 L711.7,742.7 L724.4,745.7 L732.2,749.6 L744.0,749.6 L757.7,745.7 L767.5,753.1 L773.3,747.2 L781.2,750.6 L790.0,740.8 L798.8,751.9 L806.6,740.8 L820.3,751.5 L828.1,764.3 L837.9,753.1 L847.7,753.1 L855.5,755.1 L863.3,745.7 L867.3,755.5 L868.9,755.9 L876.7,745.3 L884.6,751.9 L890.4,746.7 L899.2,743.7 L908.1,751.5 L915.9,748.6 L924.7,748.6 L929.6,741.4 L934.5,750.6 L942.3,739.8 L947.2,746.7 L958.9,744.7 L964.8,753.1 L972.6,743.7 L982.4,743.7 L990.2,751.9 L996.1,747.2 L1003.9,756.4 L1013.7,741.8 L1021.6,747.6 L1031.3,736.9 L1039.2,738.8 L1048.0,736.9 L1053.8,746.7 L1060.7,745.7 L1069.5,755.5 L1082.2,740.2 L1094.0,746.7 L1099.8,743.3 L1109.6,751.5 L1119.4,741.8 L1123.3,755.1 L1135.1,743.7 L1142.9,753.5 L1152.7,737.8 L1160.5,756.4 L1170.3,759.0 L1178.1,739.4 L1187.9,752.5 L1197.7,765.2 L1213.3,747.2 L1223.1,760.9 L1232.9,757.4 L1239.8,760.9 L1248.6,748.6 L1258.3,757.0 L1262.3,751.5 L1265.9,750.0 L1270.8,749.2 L1279.6,760.9 L1297.2,750.0 L1306.0,768.2 L1309.9,766.8 L1314.8,747.6 L1319.7,746.7 L1324.6,759.8 L1337.3,786.8 L1341.2,789.7 L1350.0,782.5 L1353.9,774.6 L1362.7,785.8 L1371.5,756.4 L1381.3,731.0 L1385.2,727.1 L1391.1,731.6 L1398.9,729.0 L1406.8,730.0 L1412.6,728.1 L1420.5,729.0 L1428.3,735.9 L1432.2,747.2 L1437.1,753.1 L1444.0,739.8 L1450.8,733.5 L1455.7,736.9 L1467.4,757.0 L1473.3,759.8 L1481.1,750.6 L1489.0,756.4 L1494.8,748.0 L1502.7,753.5 L1512.4,759.8 L1522.2,752.5 L1530.1,748.6 L1537.9,752.5 L1541.8,746.1 L1547.7,745.7 L1555.5,753.1 L1563.3,751.9 L1569.2,759.8 L1577.0,753.9 L1586.8,744.7 L1592.7,747.2 L1596.6,760.4 L1600.5,763.3 L1604.4,753.9 L1612.3,751.5 L1618.1,759.8 L1625.9,755.1 L1633.8,757.8 L1642.6,745.7 L1651.0,753.1" fill="none" stroke="#3282c8" stroke-width="1.7" stroke-linejoin="round"/>
<path d="M80.9,809.3 L86.7,806.3 L92.6,801.4 L104.4,796.6 L110.2,797.5 L121.0,804.4 L128.8,801.4 L133.7,802.8 L137.6,800.5 L142.5,805.4 L146.4,813.2 L151.3,804.4 L155.2,802.0 L160.1,806.7 L168.0,804.4 L178.7,811.2 L184.6,810.6 L192.4,808.3 L203.2,802.0 L215.9,803.4 L223.7,802.4 L230.6,807.9 L237.4,805.9 L247.2,808.3 L256.0,797.5 L264.8,804.4 L270.7,802.8 L277.5,803.4 L286.4,789.1 L295.2,806.3 L300.0,804.4 L307.9,793.0 L312.8,795.6 L319.6,804.4 L325.5,806.7 L333.3,798.9 L339.2,798.9 L347.0,803.4 L351.9,809.3 L356.8,807.3 L364.6,799.5 L374.4,804.8 L382.2,805.9 L392.0,813.2 L395.9,813.2 L404.7,800.1 L413.6,812.2 L422.4,797.5 L433.1,804.8 L440.9,806.3 L450.7,803.4 L458.6,803.4 L462.5,807.3 L466.4,807.9 L470.3,797.5 L478.8,807.9 L487.6,796.9 L497.4,802.0 L509.1,806.7 L520.9,807.9 L530.7,811.8 L540.5,802.0 L548.3,810.3 L558.1,803.4 L575.7,804.4 L589.4,813.8 L601.1,804.4 L614.8,813.2 L622.6,811.2 L632.4,794.6 L640.3,808.3 L654.0,816.1 L663.7,810.3 L675.5,798.1 L685.3,804.4 L694.1,796.6 L702.9,804.8 L711.7,798.5 L724.4,801.4 L732.2,805.4 L744.0,806.3 L749.8,799.5 L757.7,799.5 L767.5,807.3 L773.3,802.0 L781.2,804.8 L790.0,795.0 L798.8,807.9 L806.6,796.2 L820.3,805.4 L828.1,814.2 L837.9,808.7 L847.7,809.3 L859.4,801.4 L867.3,806.3 L868.9,802.4 L876.7,799.5 L881.6,805.9 L890.4,799.5 L899.2,800.5 L907.1,803.4 L915.9,800.9 L924.7,807.3 L929.6,800.5 L934.5,804.4 L942.3,796.6 L947.2,801.4 L958.9,800.5 L964.8,810.6 L972.6,797.5 L982.4,799.5 L990.2,807.3 L996.1,802.4 L1003.9,807.9 L1013.7,797.5 L1021.6,802.0 L1031.3,792.3 L1039.2,796.9 L1048.0,795.6 L1053.8,802.0 L1060.7,800.1 L1065.6,806.3 L1074.4,802.0 L1084.2,798.9 L1092.0,804.0 L1101.8,800.5 L1109.6,805.4 L1118.4,796.2 L1123.3,808.3 L1127.2,810.3 L1135.1,800.5 L1142.9,803.4 L1152.7,796.6 L1160.5,807.9 L1170.3,808.7 L1180.1,796.9 L1191.8,813.2 L1203.6,810.6 L1213.3,802.4 L1223.1,807.3 L1232.9,805.9 L1239.8,808.7 L1248.6,799.5 L1258.3,809.3 L1262.3,807.3 L1264.9,806.3 L1269.8,804.4 L1279.6,811.2 L1289.4,807.3 L1297.2,801.4 L1306.0,818.5 L1309.9,816.1 L1314.8,801.4 L1319.7,801.4 L1324.6,813.8 L1337.3,829.8 L1341.2,830.8 L1353.0,817.1 L1362.7,826.3 L1371.5,806.3 L1377.4,799.5 L1385.2,788.7 L1391.1,790.7 L1397.0,785.8 L1404.8,789.7 L1412.6,787.2 L1419.5,787.2 L1428.3,794.6 L1432.2,801.4 L1437.1,804.4 L1443.0,798.9 L1449.8,793.6 L1459.6,800.9 L1467.4,811.8 L1471.4,812.6 L1477.2,807.9 L1481.1,805.4 L1487.0,809.9 L1492.9,803.4 L1502.7,807.9 L1512.4,808.7 L1520.3,805.9 L1528.1,805.4 L1535.9,805.9 L1541.8,797.5 L1547.7,798.5 L1555.5,804.4 L1563.3,804.0 L1569.2,811.2 L1577.0,805.4 L1586.8,802.4 L1592.7,803.4 L1596.6,813.2 L1604.4,804.4 L1616.2,812.2 L1625.9,805.4 L1633.8,807.3 L1642.6,800.1 L1651.0,808.3" fill="none" stroke="#50a0dc" stroke-width="1.7" stroke-linejoin="round"/>
<path d="M80.9,859.2 L94.6,852.3 L100.4,855.3 L107.3,852.3 L116.1,858.2 L125.9,855.3 L137.6,856.2 L142.5,860.7 L146.4,860.7 L151.3,856.2 L155.2,857.2 L160.1,860.7 L168.0,851.4 L172.8,858.2 L181.7,858.2 L190.5,859.2 L203.2,856.8 L215.9,856.2 L225.7,858.2 L229.6,861.1 L238.4,856.8 L247.2,859.2 L256.0,851.4 L260.9,855.3 L268.7,856.2 L274.6,855.3 L282.4,849.4 L292.2,857.2 L300.0,860.2 L307.9,852.3 L315.7,856.8 L322.6,856.2 L329.4,858.2 L335.3,856.2 L341.1,858.2 L348.0,857.2 L351.9,861.1 L356.8,858.8 L362.7,854.3 L368.5,853.3 L374.4,859.6 L382.2,855.3 L392.0,862.1 L399.9,860.7 L405.7,855.7 L414.5,859.2 L423.3,855.7 L427.3,858.8 L435.1,855.3 L439.0,859.6 L448.8,855.3 L458.6,860.2 L468.3,854.9 L478.8,860.2 L487.6,855.3 L497.4,859.2 L502.3,857.2 L517.0,860.2 L527.7,864.1 L536.5,856.2 L544.4,859.2 L552.2,856.8 L562.0,859.2 L579.6,857.6 L588.4,863.1 L597.2,857.6 L607.0,860.2 L614.8,862.7 L622.6,860.2 L632.4,853.3 L644.2,862.1 L654.0,864.7 L663.7,859.2 L675.5,853.7 L685.3,859.2 L694.1,852.9 L702.9,859.2 L714.6,856.2 L724.4,860.7 L736.1,857.6 L745.9,859.6 L753.8,854.3 L763.5,860.7 L771.4,855.3 L785.1,853.7 L792.9,861.1 L804.6,853.3 L820.3,861.1 L835.9,862.7 L843.8,859.6 L853.6,856.2 L867.3,856.8 L868.9,854.3 L880.7,858.8 L885.5,852.3 L894.4,856.2 L899.2,853.7 L910.0,857.2 L917.8,854.9 L923.7,855.7 L929.6,860.2 L934.5,860.2 L942.3,850.4 L947.2,855.3 L958.9,854.3 L964.8,863.1 L970.7,859.2 L982.4,853.3 L990.2,861.1 L996.1,856.2 L1003.9,859.2 L1011.8,851.7 L1019.6,856.2 L1025.5,853.7 L1033.3,854.3 L1043.1,851.4 L1052.9,855.3 L1060.7,852.9 L1069.5,861.1 L1074.4,857.6 L1086.1,855.3 L1092.0,856.8 L1099.8,854.9 L1109.6,859.2 L1117.4,854.3 L1121.4,861.1 L1135.1,851.7 L1144.8,857.6 L1154.6,854.9 L1162.5,860.7 L1170.3,861.1 L1178.1,852.3 L1187.9,860.2 L1205.5,862.1 L1213.3,857.2 L1223.1,858.2 L1230.9,853.3 L1240.7,856.2 L1248.6,851.7 L1256.4,857.6 L1262.3,856.2 L1264.9,857.6 L1269.8,859.2 L1279.6,862.1 L1285.4,861.5 L1295.2,856.2 L1306.0,865.4 L1310.9,862.7 L1314.8,855.3 L1319.7,857.2 L1324.6,862.7 L1330.5,865.0 L1336.3,871.9 L1340.2,873.9 L1350.0,866.6 L1353.9,867.0 L1358.8,869.9 L1362.7,869.0 L1371.5,854.3 L1377.4,852.3 L1385.2,849.0 L1393.1,847.4 L1400.9,852.3 L1412.6,849.4 L1419.5,844.5 L1428.3,855.3 L1434.2,858.2 L1444.0,856.2 L1459.6,855.3 L1467.4,863.1 L1475.3,856.2 L1485.0,861.1 L1492.9,856.8 L1510.5,861.5 L1516.4,858.2 L1526.1,857.2 L1534.0,860.7 L1541.8,851.7 L1547.7,855.3 L1553.5,855.7 L1557.5,856.8 L1565.3,856.2 L1569.2,862.1 L1579.0,856.8 L1588.8,857.2 L1594.6,860.7 L1602.5,858.2 L1618.1,862.1 L1625.9,858.2 L1633.8,861.5 L1641.6,856.2 L1651.0,862.1" fill="none" stroke="#c8e6fa" stroke-width="1.7" stroke-linejoin="round"/>
<line x1="78.5" y1="911.1" x2="1654.5" y2="911.1" stroke="rgba(240,250,255,0.12)" stroke-width="2"/>
<text x="70.0" y="917.1" font-size="20" fill="#c7c7d1" text-anchor="end" font-weight="normal" textLength="11.7" lengthAdjust="spacingAndGlyphs" stroke="#c7c7d1" stroke-width="0.3" >0</text>
<line x1="78.5" y1="817.4" x2="1654.5" y2="817.4" stroke="rgba(240,250,255,0.12)" stroke-width="2"/>
<text x="70.0" y="823.4" font-size="20" fill="#c7c7d1" text-anchor="end" font-weight="normal" textLength="22.5" lengthAdjust="spacingAndGlyphs" stroke="#c7c7d1" stroke-width="0.3" >50</text>
<line x1="78.5" y1="723.7" x2="1654.5" y2="723.7" stroke="rgba(240,250,255,0.12)" stroke-width="2"/>
<text x="70.0" y="729.7" font-size="20" fill="#c7c7d1" text-anchor="end" font-weight="normal" textLength="30.5" lengthAdjust="spacingAndGlyphs" stroke="#c7c7d1" stroke-width="0.3" >100</text>
<line x1="78.5" y1="630.0" x2="1654.5" y2="630.0" stroke="rgba(240,250,255,0.12)" stroke-width="2"/>
<text x="70.0" y="636.0" font-size="20" fill="#c7c7d1" text-anchor="end" font-weight="normal" textLength="30.1" lengthAdjust="spacingAndGlyphs" stroke="#c7c7d1" stroke-width="0.3" >150</text>
<line x1="86.3" y1="630.0" x2="86.3" y2="912.1" stroke="rgba(240,250,255,0.12)" stroke-width="2"/>
<text x="86.3" y="941.0" font-size="20" fill="#c7c7d1" text-anchor="middle" font-weight="normal" textLength="46.6" lengthAdjust="spacingAndGlyphs" stroke="#c7c7d1" stroke-width="0.3" >16:50</text>
<line x1="217.5" y1="630.0" x2="217.5" y2="912.1" stroke="rgba(240,250,255,0.12)" stroke-width="2"/>
<text x="217.5" y="941.0" font-size="20" fill="#c7c7d1" text-anchor="middle" font-weight="normal" textLength="46.2" lengthAdjust="spacingAndGlyphs" stroke="#c7c7d1" stroke-width="0.3" >16:55</text>
<line x1="348.6" y1="630.0" x2="348.6" y2="912.1" stroke="rgba(240,250,255,0.12)" stroke-width="2"/>
<text x="348.6" y="941.0" font-size="20" fill="#c7c7d1" text-anchor="middle" font-weight="normal" textLength="46.5" lengthAdjust="spacingAndGlyphs" stroke="#c7c7d1" stroke-width="0.3" >17:00</text>
<line x1="479.8" y1="630.0" x2="479.8" y2="912.1" stroke="rgba(240,250,255,0.12)" stroke-width="2"/>
<text x="479.8" y="941.0" font-size="20" fill="#c7c7d1" text-anchor="middle" font-weight="normal" textLength="46.1" lengthAdjust="spacingAndGlyphs" stroke="#c7c7d1" stroke-width="0.3" >17:05</text>
<line x1="611.0" y1="630.0" x2="611.0" y2="912.1" stroke="rgba(240,250,255,0.12)" stroke-width="2"/>
<text x="611.0" y="941.0" font-size="20" fill="#c7c7d1" text-anchor="middle" font-weight="normal" textLength="42.9" lengthAdjust="spacingAndGlyphs" stroke="#c7c7d1" stroke-width="0.3" >17:10</text>
<line x1="742.1" y1="630.0" x2="742.1" y2="912.1" stroke="rgba(240,250,255,0.12)" stroke-width="2"/>
<text x="742.1" y="941.0" font-size="20" fill="#c7c7d1" text-anchor="middle" font-weight="normal" textLength="42.5" lengthAdjust="spacingAndGlyphs" stroke="#c7c7d1" stroke-width="0.3" >17:15</text>
<line x1="873.3" y1="630.0" x2="873.3" y2="912.1" stroke="rgba(240,250,255,0.12)" stroke-width="2"/>
<text x="873.3" y="941.0" font-size="20" fill="#c7c7d1" text-anchor="middle" font-weight="normal" textLength="46.1" lengthAdjust="spacingAndGlyphs" stroke="#c7c7d1" stroke-width="0.3" >17:20</text>
<line x1="1004.5" y1="630.0" x2="1004.5" y2="912.1" stroke="rgba(240,250,255,0.12)" stroke-width="2"/>
<text x="1004.5" y="941.0" font-size="20" fill="#c7c7d1" text-anchor="middle" font-weight="normal" textLength="45.7" lengthAdjust="spacingAndGlyphs" stroke="#c7c7d1" stroke-width="0.3" >17:25</text>
<line x1="1135.7" y1="630.0" x2="1135.7" y2="912.1" stroke="rgba(240,250,255,0.12)" stroke-width="2"/>
<text x="1135.7" y="941.0" font-size="20" fill="#c7c7d1" text-anchor="middle" font-weight="normal" textLength="46.3" lengthAdjust="spacingAndGlyphs" stroke="#c7c7d1" stroke-width="0.3" >17:30</text>
<line x1="1266.8" y1="630.0" x2="1266.8" y2="912.1" stroke="rgba(240,250,255,0.12)" stroke-width="2"/>
<text x="1266.8" y="941.0" font-size="20" fill="#c7c7d1" text-anchor="middle" font-weight="normal" textLength="45.9" lengthAdjust="spacingAndGlyphs" stroke="#c7c7d1" stroke-width="0.3" >17:35</text>
<line x1="1398.0" y1="630.0" x2="1398.0" y2="912.1" stroke="rgba(240,250,255,0.12)" stroke-width="2"/>
<text x="1398.0" y="941.0" font-size="20" fill="#c7c7d1" text-anchor="middle" font-weight="normal" textLength="46.5" lengthAdjust="spacingAndGlyphs" stroke="#c7c7d1" stroke-width="0.3" >17:40</text>
<line x1="1529.2" y1="630.0" x2="1529.2" y2="912.1" stroke="rgba(240,250,255,0.12)" stroke-width="2"/>
<text x="1529.2" y="941.0" font-size="20" fill="#c7c7d1" text-anchor="middle" font-weight="normal" textLength="46.1" lengthAdjust="spacingAndGlyphs" stroke="#c7c7d1" stroke-width="0.3" >17:45</text>
<rect x="53.7" y="971.4" width="21.3" height="6.3" rx="3.15" fill="#c8e6fa"/>
<text x="96.4" y="978.5" font-size="19.8" fill="#ccccdc" text-anchor="start" font-weight="normal" textLength="128" lengthAdjust="spacingAndGlyphs" stroke="#ccccdc" stroke-width="0.3" >web_server_01</text>
<rect x="250" y="971.4" width="21.3" height="6.3" rx="3.15" fill="#5aa0dc"/>
<text x="292.9" y="978.5" font-size="19.8" fill="#ccccdc" text-anchor="start" font-weight="normal" textLength="130.5" lengthAdjust="spacingAndGlyphs" stroke="#ccccdc" stroke-width="0.3" >web_server_02</text>
<rect x="449" y="971.4" width="21.3" height="6.3" rx="3.15" fill="#2b80d0"/>
<text x="491.4" y="978.5" font-size="19.8" fill="#ccccdc" text-anchor="start" font-weight="normal" textLength="131" lengthAdjust="spacingAndGlyphs" stroke="#ccccdc" stroke-width="0.3" >web_server_03</text>
<rect x="648.3" y="971.4" width="21.3" height="6.3" rx="3.15" fill="#1a4a80"/>
<text x="691.0" y="978.5" font-size="19.8" fill="#ccccdc" text-anchor="start" font-weight="normal" textLength="131.5" lengthAdjust="spacingAndGlyphs" stroke="#ccccdc" stroke-width="0.3" >web_server_04</text>
<rect x="1707.5" y="552.4" width="827.6" height="449.6" rx="3" fill="#181b1f" stroke="rgba(204,204,220,0.09)" stroke-width="2"/>
<text x="1720.8" y="585.3" font-size="24" fill="#ccccdc" text-anchor="start" font-weight="normal" textLength="117" lengthAdjust="spacingAndGlyphs" stroke="#ccccdc" stroke-width="1.008" >Google hits</text>
<rect x="1720.2" y="655.8" width="147.8" height="299.0" rx="2" fill="#222327"/>
<rect x="1720.2" y="952.0" width="147.8" height="2.8" rx="2" fill="#2c4a73"/>
<rect x="1720.2" y="952.0" width="147.8" height="3.2" rx="1.5" fill="#5794f2"/>
<text x="1794.1" y="646.0" font-size="40" fill="#5794f2" text-anchor="middle" font-weight="normal" textLength="101" lengthAdjust="spacingAndGlyphs" stroke="#5794f2" stroke-width="0.8" >0.400</text>
<text x="1794.1" y="980.0" font-size="21.5" fill="#ccccdc" text-anchor="middle" font-weight="normal" textLength="85" lengthAdjust="spacingAndGlyphs" stroke="#ccccdc" stroke-width="0.3" >A-series</text>
<rect x="1883.4" y="655.8" width="148.5" height="299.0" rx="2" fill="#222327"/>
<rect x="1883.4" y="870.2" width="148.5" height="84.6" rx="2" fill="#2c4a73"/>
<rect x="1883.4" y="870.2" width="148.5" height="3.2" rx="1.5" fill="#5794f2"/>
<text x="1957.7" y="646.0" font-size="40" fill="#5794f2" text-anchor="middle" font-weight="normal" textLength="68" lengthAdjust="spacingAndGlyphs" stroke="#5794f2" stroke-width="0.8" >27.7</text>
<text x="1957.7" y="980.0" font-size="21.5" fill="#ccccdc" text-anchor="middle" font-weight="normal" textLength="85" lengthAdjust="spacingAndGlyphs" stroke="#ccccdc" stroke-width="0.3" >B-series</text>
<rect x="2047.0" y="655.8" width="147.8" height="299.0" rx="2" fill="#222327"/>
<rect x="2047.0" y="841.6" width="147.8" height="113.2" rx="2" fill="#2c4a73"/>
<rect x="2047.0" y="841.6" width="147.8" height="3.2" rx="1.5" fill="#5794f2"/>
<text x="2120.9" y="646.0" font-size="40" fill="#5794f2" text-anchor="middle" font-weight="normal" textLength="62" lengthAdjust="spacingAndGlyphs" stroke="#5794f2" stroke-width="0.8" >37.1</text>
<text x="2120.9" y="980.0" font-size="21.5" fill="#ccccdc" text-anchor="middle" font-weight="normal" textLength="85" lengthAdjust="spacingAndGlyphs" stroke="#ccccdc" stroke-width="0.3" >C-series</text>
<rect x="2210.0" y="655.8" width="148.7" height="299.0" rx="2" fill="#222327"/>
<rect x="2210.0" y="752.3" width="148.7" height="202.5" rx="2" fill="#4f3b62"/>
<rect x="2210.0" y="752.3" width="148.7" height="3.2" rx="1.5" fill="#b877d9"/>
<text x="2284.3" y="646.0" font-size="40" fill="#b877d9" text-anchor="middle" font-weight="normal" textLength="75" lengthAdjust="spacingAndGlyphs" stroke="#b877d9" stroke-width="0.8" >66.5</text>
<text x="2284.3" y="980.0" font-size="21.5" fill="#ccccdc" text-anchor="middle" font-weight="normal" textLength="86" lengthAdjust="spacingAndGlyphs" stroke="#ccccdc" stroke-width="0.3" >D-series</text>
<rect x="2373.8" y="655.8" width="147.8" height="299.0" rx="2" fill="#222327"/>
<rect x="2373.8" y="890.3" width="147.8" height="64.5" rx="2" fill="#2c4a73"/>
<rect x="2373.8" y="890.3" width="147.8" height="3.2" rx="1.5" fill="#5794f2"/>
<text x="2447.7" y="646.0" font-size="40" fill="#5794f2" text-anchor="middle" font-weight="normal" textLength="69" lengthAdjust="spacingAndGlyphs" stroke="#5794f2" stroke-width="0.8" >21.2</text>
<text x="2447.7" y="980.0" font-size="21.5" fill="#ccccdc" text-anchor="middle" font-weight="normal" textLength="83" lengthAdjust="spacingAndGlyphs" stroke="#ccccdc" stroke-width="0.3" >E-series</text>
<rect x="25.1" y="1015.3" width="2510.0" height="391.8" rx="3" fill="#181b1f" stroke="rgba(204,204,220,0.09)" stroke-width="2"/>
<text x="1280.0" y="1049.0" font-size="24" fill="#ccccdc" text-anchor="middle" font-weight="normal" textLength="246" lengthAdjust="spacingAndGlyphs" stroke="#ccccdc" stroke-width="1.008" >client side full page load</text>
<line x1="88" y1="1357.7" x2="2259.3" y2="1357.7" stroke="rgba(240,250,255,0.16)" stroke-width="2"/>
<text x="80.8" y="1363.4" font-size="20" fill="#c7c7d1" text-anchor="end" font-weight="normal" textLength="41.9" lengthAdjust="spacingAndGlyphs" stroke="#c7c7d1" stroke-width="0.3" >0 ms</text>
<line x1="88" y1="1304.8" x2="2259.3" y2="1304.8" stroke="rgba(240,250,255,0.16)" stroke-width="2"/>
<text x="80.8" y="1310.5" font-size="20" fill="#c7c7d1" text-anchor="end" font-weight="normal" textLength="22.8" lengthAdjust="spacingAndGlyphs" stroke="#c7c7d1" stroke-width="0.3" >1 s</text>
<line x1="88" y1="1251.8" x2="2259.3" y2="1251.8" stroke="rgba(240,250,255,0.16)" stroke-width="2"/>
<text x="80.8" y="1257.5" font-size="20" fill="#c7c7d1" text-anchor="end" font-weight="normal" textLength="26.0" lengthAdjust="spacingAndGlyphs" stroke="#c7c7d1" stroke-width="0.3" >2 s</text>
<line x1="88" y1="1198.9" x2="2259.3" y2="1198.9" stroke="rgba(240,250,255,0.16)" stroke-width="2"/>
<text x="80.8" y="1204.6" font-size="20" fill="#c7c7d1" text-anchor="end" font-weight="normal" textLength="26.2" lengthAdjust="spacingAndGlyphs" stroke="#c7c7d1" stroke-width="0.3" >3 s</text>
<line x1="88" y1="1145.9" x2="2259.3" y2="1145.9" stroke="rgba(240,250,255,0.16)" stroke-width="2"/>
<text x="80.8" y="1151.6" font-size="20" fill="#c7c7d1" text-anchor="end" font-weight="normal" textLength="26.4" lengthAdjust="spacingAndGlyphs" stroke="#c7c7d1" stroke-width="0.3" >4 s</text>
<line x1="88" y1="1093.0" x2="2259.3" y2="1093.0" stroke="rgba(240,250,255,0.16)" stroke-width="2"/>
<text x="80.8" y="1098.7" font-size="20" fill="#c7c7d1" text-anchor="end" font-weight="normal" textLength="26.0" lengthAdjust="spacingAndGlyphs" stroke="#c7c7d1" stroke-width="0.3" >5 s</text>
<line x1="98.2" y1="1093.0" x2="98.2" y2="1358.7" stroke="rgba(240,250,255,0.16)" stroke-width="2"/>
<text x="98.2" y="1387.2" font-size="20" fill="#c7c7d1" text-anchor="middle" font-weight="normal" textLength="46.6" lengthAdjust="spacingAndGlyphs" stroke="#c7c7d1" stroke-width="0.3" >16:50</text>
<line x1="279.0" y1="1093.0" x2="279.0" y2="1358.7" stroke="rgba(240,250,255,0.16)" stroke-width="2"/>
<text x="279.0" y="1387.2" font-size="20" fill="#c7c7d1" text-anchor="middle" font-weight="normal" textLength="46.2" lengthAdjust="spacingAndGlyphs" stroke="#c7c7d1" stroke-width="0.3" >16:55</text>
<line x1="459.8" y1="1093.0" x2="459.8" y2="1358.7" stroke="rgba(240,250,255,0.16)" stroke-width="2"/>
<text x="459.8" y="1387.2" font-size="20" fill="#c7c7d1" text-anchor="middle" font-weight="normal" textLength="46.5" lengthAdjust="spacingAndGlyphs" stroke="#c7c7d1" stroke-width="0.3" >17:00</text>
<line x1="640.6" y1="1093.0" x2="640.6" y2="1358.7" stroke="rgba(240,250,255,0.16)" stroke-width="2"/>
<text x="640.6" y="1387.2" font-size="20" fill="#c7c7d1" text-anchor="middle" font-weight="normal" textLength="46.1" lengthAdjust="spacingAndGlyphs" stroke="#c7c7d1" stroke-width="0.3" >17:05</text>
<line x1="821.4" y1="1093.0" x2="821.4" y2="1358.7" stroke="rgba(240,250,255,0.16)" stroke-width="2"/>
<text x="821.4" y="1387.2" font-size="20" fill="#c7c7d1" text-anchor="middle" font-weight="normal" textLength="42.9" lengthAdjust="spacingAndGlyphs" stroke="#c7c7d1" stroke-width="0.3" >17:10</text>
<line x1="1002.2" y1="1093.0" x2="1002.2" y2="1358.7" stroke="rgba(240,250,255,0.16)" stroke-width="2"/>
<text x="1002.2" y="1387.2" font-size="20" fill="#c7c7d1" text-anchor="middle" font-weight="normal" textLength="42.5" lengthAdjust="spacingAndGlyphs" stroke="#c7c7d1" stroke-width="0.3" >17:15</text>
<line x1="1183.0" y1="1093.0" x2="1183.0" y2="1358.7" stroke="rgba(240,250,255,0.16)" stroke-width="2"/>
<text x="1183.0" y="1387.2" font-size="20" fill="#c7c7d1" text-anchor="middle" font-weight="normal" textLength="46.1" lengthAdjust="spacingAndGlyphs" stroke="#c7c7d1" stroke-width="0.3" >17:20</text>
<line x1="1363.8" y1="1093.0" x2="1363.8" y2="1358.7" stroke="rgba(240,250,255,0.16)" stroke-width="2"/>
<text x="1363.8" y="1387.2" font-size="20" fill="#c7c7d1" text-anchor="middle" font-weight="normal" textLength="45.7" lengthAdjust="spacingAndGlyphs" stroke="#c7c7d1" stroke-width="0.3" >17:25</text>
<line x1="1544.6" y1="1093.0" x2="1544.6" y2="1358.7" stroke="rgba(240,250,255,0.16)" stroke-width="2"/>
<text x="1544.6" y="1387.2" font-size="20" fill="#c7c7d1" text-anchor="middle" font-weight="normal" textLength="46.3" lengthAdjust="spacingAndGlyphs" stroke="#c7c7d1" stroke-width="0.3" >17:30</text>
<line x1="1725.4" y1="1093.0" x2="1725.4" y2="1358.7" stroke="rgba(240,250,255,0.16)" stroke-width="2"/>
<text x="1725.4" y="1387.2" font-size="20" fill="#c7c7d1" text-anchor="middle" font-weight="normal" textLength="45.9" lengthAdjust="spacingAndGlyphs" stroke="#c7c7d1" stroke-width="0.3" >17:35</text>
<line x1="1906.2" y1="1093.0" x2="1906.2" y2="1358.7" stroke="rgba(240,250,255,0.16)" stroke-width="2"/>
<text x="1906.2" y="1387.2" font-size="20" fill="#c7c7d1" text-anchor="middle" font-weight="normal" textLength="46.5" lengthAdjust="spacingAndGlyphs" stroke="#c7c7d1" stroke-width="0.3" >17:40</text>
<line x1="2087.0" y1="1093.0" x2="2087.0" y2="1358.7" stroke="rgba(240,250,255,0.16)" stroke-width="2"/>
<text x="2087.0" y="1387.2" font-size="20" fill="#c7c7d1" text-anchor="middle" font-weight="normal" textLength="46.1" lengthAdjust="spacingAndGlyphs" stroke="#c7c7d1" stroke-width="0.3" >17:45</text>
<clipPath id="clc"><rect x="90" y="1000" width="2169.3" height="400"/></clipPath>
<g clip-path="url(#clc)">
<rect x="26.1" y="1179.7" width="96.4" height="89.7" fill="#e24d42"/>
<rect x="26.1" y="1269.4" width="96.4" height="55.1" fill="#ef843c"/>
<rect x="26.1" y="1324.5" width="96.4" height="28.2" fill="#eab839"/>
<rect x="26.1" y="1352.7" width="96.4" height="5.0" fill="#f2c96d"/>
<rect x="26.1" y="1268.9" width="96.4" height="1" fill="rgba(0,0,0,0.25)"/>
<rect x="26.1" y="1324.0" width="96.4" height="1" fill="rgba(0,0,0,0.25)"/>
<rect x="26.1" y="1352.2" width="96.4" height="1" fill="rgba(0,0,0,0.25)"/>
<rect x="170.6" y="1245.2" width="96.4" height="49.0" fill="#e24d42"/>
<rect x="170.6" y="1294.2" width="96.4" height="39.7" fill="#ef843c"/>
<rect x="170.6" y="1333.9" width="96.4" height="22.1" fill="#eab839"/>
<rect x="170.6" y="1356.0" width="96.4" height="1.7" fill="#f2c96d"/>
<rect x="170.6" y="1293.7" width="96.4" height="1" fill="rgba(0,0,0,0.25)"/>
<rect x="170.6" y="1333.4" width="96.4" height="1" fill="rgba(0,0,0,0.25)"/>
<rect x="170.6" y="1355.5" width="96.4" height="1" fill="rgba(0,0,0,0.25)"/>
<rect x="315.1" y="1190.8" width="96.4" height="78.6" fill="#e24d42"/>
<rect x="315.1" y="1269.4" width="96.4" height="53.4" fill="#ef843c"/>
<rect x="315.1" y="1322.8" width="96.4" height="29.2" fill="#eab839"/>
<rect x="315.1" y="1352.0" width="96.4" height="5.7" fill="#f2c96d"/>
<rect x="315.1" y="1268.9" width="96.4" height="1" fill="rgba(0,0,0,0.25)"/>
<rect x="315.1" y="1322.3" width="96.4" height="1" fill="rgba(0,0,0,0.25)"/>
<rect x="315.1" y="1351.5" width="96.4" height="1" fill="rgba(0,0,0,0.25)"/>
<rect x="459.6" y="1193.8" width="96.4" height="77.2" fill="#e24d42"/>
<rect x="459.6" y="1271.0" width="96.4" height="53.1" fill="#ef843c"/>
<rect x="459.6" y="1324.1" width="96.4" height="27.9" fill="#eab839"/>
<rect x="459.6" y="1352.0" width="96.4" height="5.7" fill="#f2c96d"/>
<rect x="459.6" y="1270.5" width="96.4" height="1" fill="rgba(0,0,0,0.25)"/>
<rect x="459.6" y="1323.6" width="96.4" height="1" fill="rgba(0,0,0,0.25)"/>
<rect x="459.6" y="1351.5" width="96.4" height="1" fill="rgba(0,0,0,0.25)"/>
<rect x="604.1" y="1207.9" width="96.4" height="69.9" fill="#e24d42"/>
<rect x="604.1" y="1277.8" width="96.4" height="49.7" fill="#ef843c"/>
<rect x="604.1" y="1327.5" width="96.4" height="25.2" fill="#eab839"/>
<rect x="604.1" y="1352.7" width="96.4" height="5.0" fill="#f2c96d"/>
<rect x="604.1" y="1277.3" width="96.4" height="1" fill="rgba(0,0,0,0.25)"/>
<rect x="604.1" y="1327.0" width="96.4" height="1" fill="rgba(0,0,0,0.25)"/>
<rect x="604.1" y="1352.2" width="96.4" height="1" fill="rgba(0,0,0,0.25)"/>
<rect x="748.6" y="1212.6" width="96.4" height="61.1" fill="#e24d42"/>
<rect x="748.6" y="1273.7" width="96.4" height="51.1" fill="#ef843c"/>
<rect x="748.6" y="1324.8" width="96.4" height="26.2" fill="#eab839"/>
<rect x="748.6" y="1351.0" width="96.4" height="6.7" fill="#f2c96d"/>
<rect x="748.6" y="1273.2" width="96.4" height="1" fill="rgba(0,0,0,0.25)"/>
<rect x="748.6" y="1324.3" width="96.4" height="1" fill="rgba(0,0,0,0.25)"/>
<rect x="748.6" y="1350.5" width="96.4" height="1" fill="rgba(0,0,0,0.25)"/>
<rect x="893.1" y="1213.0" width="96.4" height="70.0" fill="#e24d42"/>
<rect x="893.1" y="1283.0" width="96.4" height="44.0" fill="#ef843c"/>
<rect x="893.1" y="1327.0" width="96.4" height="24.0" fill="#eab839"/>
<rect x="893.1" y="1351.0" width="96.4" height="6.7" fill="#f2c96d"/>
<rect x="893.1" y="1282.5" width="96.4" height="1" fill="rgba(0,0,0,0.25)"/>
<rect x="893.1" y="1326.5" width="96.4" height="1" fill="rgba(0,0,0,0.25)"/>
<rect x="893.1" y="1350.5" width="96.4" height="1" fill="rgba(0,0,0,0.25)"/>
<rect x="1037.6" y="1192.0" width="96.4" height="73.0" fill="#e24d42"/>
<rect x="1037.6" y="1265.0" width="96.4" height="56.0" fill="#ef843c"/>
<rect x="1037.6" y="1321.0" width="96.4" height="28.0" fill="#eab839"/>
<rect x="1037.6" y="1349.0" width="96.4" height="8.7" fill="#f2c96d"/>
<rect x="1037.6" y="1264.5" width="96.4" height="1" fill="rgba(0,0,0,0.25)"/>
<rect x="1037.6" y="1320.5" width="96.4" height="1" fill="rgba(0,0,0,0.25)"/>
<rect x="1037.6" y="1348.5" width="96.4" height="1" fill="rgba(0,0,0,0.25)"/>
<rect x="1182.1" y="1147.0" width="96.4" height="99.0" fill="#e24d42"/>
<rect x="1182.1" y="1246.0" width="96.4" height="71.0" fill="#ef843c"/>
<rect x="1182.1" y="1317.0" width="96.4" height="31.0" fill="#eab839"/>
<rect x="1182.1" y="1348.0" width="96.4" height="9.7" fill="#f2c96d"/>
<rect x="1182.1" y="1245.5" width="96.4" height="1" fill="rgba(0,0,0,0.25)"/>
<rect x="1182.1" y="1316.5" width="96.4" height="1" fill="rgba(0,0,0,0.25)"/>
<rect x="1182.1" y="1347.5" width="96.4" height="1" fill="rgba(0,0,0,0.25)"/>
<rect x="1326.6" y="1204.0" width="96.4" height="68.0" fill="#e24d42"/>
<rect x="1326.6" y="1272.0" width="96.4" height="48.0" fill="#ef843c"/>
<rect x="1326.6" y="1320.0" width="96.4" height="29.0" fill="#eab839"/>
<rect x="1326.6" y="1349.0" width="96.4" height="8.7" fill="#f2c96d"/>
<rect x="1326.6" y="1271.5" width="96.4" height="1" fill="rgba(0,0,0,0.25)"/>
<rect x="1326.6" y="1319.5" width="96.4" height="1" fill="rgba(0,0,0,0.25)"/>
<rect x="1326.6" y="1348.5" width="96.4" height="1" fill="rgba(0,0,0,0.25)"/>
<rect x="1471.1" y="1147.0" width="96.4" height="94.0" fill="#e24d42"/>
<rect x="1471.1" y="1241.0" width="96.4" height="69.0" fill="#ef843c"/>
<rect x="1471.1" y="1310.0" width="96.4" height="34.0" fill="#eab839"/>
<rect x="1471.1" y="1344.0" width="96.4" height="13.7" fill="#f2c96d"/>
<rect x="1471.1" y="1240.5" width="96.4" height="1" fill="rgba(0,0,0,0.25)"/>
<rect x="1471.1" y="1309.5" width="96.4" height="1" fill="rgba(0,0,0,0.25)"/>
<rect x="1471.1" y="1343.5" width="96.4" height="1" fill="rgba(0,0,0,0.25)"/>
<rect x="1615.6" y="1189.4" width="96.4" height="78.3" fill="#e24d42"/>
<rect x="1615.6" y="1267.7" width="96.4" height="58.8" fill="#ef843c"/>
<rect x="1615.6" y="1326.5" width="96.4" height="23.8" fill="#eab839"/>
<rect x="1615.6" y="1350.3" width="96.4" height="7.4" fill="#f2c96d"/>
<rect x="1615.6" y="1267.2" width="96.4" height="1" fill="rgba(0,0,0,0.25)"/>
<rect x="1615.6" y="1326.0" width="96.4" height="1" fill="rgba(0,0,0,0.25)"/>
<rect x="1615.6" y="1349.8" width="96.4" height="1" fill="rgba(0,0,0,0.25)"/>
<rect x="1760.1" y="1154.5" width="96.4" height="100.1" fill="#e24d42"/>
<rect x="1760.1" y="1254.6" width="96.4" height="63.1" fill="#ef843c"/>
<rect x="1760.1" y="1317.7" width="96.4" height="28.9" fill="#eab839"/>
<rect x="1760.1" y="1346.6" width="96.4" height="11.1" fill="#f2c96d"/>
<rect x="1760.1" y="1254.1" width="96.4" height="1" fill="rgba(0,0,0,0.25)"/>
<rect x="1760.1" y="1317.2" width="96.4" height="1" fill="rgba(0,0,0,0.25)"/>
<rect x="1760.1" y="1346.1" width="96.4" height="1" fill="rgba(0,0,0,0.25)"/>
<rect x="1904.6" y="1182.7" width="96.4" height="71.9" fill="#e24d42"/>
<rect x="1904.6" y="1254.6" width="96.4" height="57.1" fill="#ef843c"/>
<rect x="1904.6" y="1311.7" width="96.4" height="33.6" fill="#eab839"/>
<rect x="1904.6" y="1345.3" width="96.4" height="12.4" fill="#f2c96d"/>
<rect x="1904.6" y="1254.1" width="96.4" height="1" fill="rgba(0,0,0,0.25)"/>
<rect x="1904.6" y="1311.2" width="96.4" height="1" fill="rgba(0,0,0,0.25)"/>
<rect x="1904.6" y="1344.8" width="96.4" height="1" fill="rgba(0,0,0,0.25)"/>
<rect x="2049.1" y="1150.8" width="96.4" height="92.0" fill="#e24d42"/>
<rect x="2049.1" y="1242.8" width="96.4" height="61.8" fill="#ef843c"/>
<rect x="2049.1" y="1304.6" width="96.4" height="40.0" fill="#eab839"/>
<rect x="2049.1" y="1344.6" width="96.4" height="13.1" fill="#f2c96d"/>
<rect x="2049.1" y="1242.3" width="96.4" height="1" fill="rgba(0,0,0,0.25)"/>
<rect x="2049.1" y="1304.1" width="96.4" height="1" fill="rgba(0,0,0,0.25)"/>
<rect x="2049.1" y="1344.1" width="96.4" height="1" fill="rgba(0,0,0,0.25)"/>
<rect x="2193.6" y="1207.9" width="96.4" height="71.9" fill="#e24d42"/>
<rect x="2193.6" y="1279.8" width="96.4" height="52.4" fill="#ef843c"/>
<rect x="2193.6" y="1332.2" width="96.4" height="23.2" fill="#eab839"/>
<rect x="2193.6" y="1355.4" width="96.4" height="2.3" fill="#f2c96d"/>
<rect x="2193.6" y="1279.3" width="96.4" height="1" fill="rgba(0,0,0,0.25)"/>
<rect x="2193.6" y="1331.7" width="96.4" height="1" fill="rgba(0,0,0,0.25)"/>
<rect x="2193.6" y="1354.9" width="96.4" height="1" fill="rgba(0,0,0,0.25)"/>
</g>
<text x="2482.7" y="1107.3" font-size="22" fill="#3ba9f0" text-anchor="middle" font-weight="normal" textLength="31" lengthAdjust="spacingAndGlyphs" stroke="#3ba9f0" stroke-width="0.45" >avg</text>
<rect x="2295.5" y="1135.2" width="21.6" height="6.4" rx="3.2" fill="#f9e2d2"/>
<text x="2333.2" y="1144.0" font-size="19.8" fill="#ccccdc" text-anchor="start" font-weight="normal" textLength="81" lengthAdjust="spacingAndGlyphs" stroke="#ccccdc" stroke-width="0.3" >upper_25</text>
<text x="2510.5" y="1144.0" font-size="19.8" fill="#ccccdc" text-anchor="end" font-weight="normal" textLength="66.5" lengthAdjust="spacingAndGlyphs" stroke="#ccccdc" stroke-width="0.3" >6.81 ms</text>
<rect x="2293" y="1157.2" width="220.6" height="41" fill="#222327"/>
<rect x="2295.5" y="1176.2" width="21.6" height="6.4" rx="3.2" fill="#f2c96d"/>
<text x="2333.2" y="1185.0" font-size="19.8" fill="#ccccdc" text-anchor="start" font-weight="normal" textLength="81" lengthAdjust="spacingAndGlyphs" stroke="#ccccdc" stroke-width="0.3" >upper_50</text>
<text x="2510.5" y="1185.0" font-size="19.8" fill="#ccccdc" text-anchor="end" font-weight="normal" textLength="62.1" lengthAdjust="spacingAndGlyphs" stroke="#ccccdc" stroke-width="0.3" >142 ms</text>
<rect x="2295.5" y="1217.2" width="21.6" height="6.4" rx="3.2" fill="#eab839"/>
<text x="2333.2" y="1226.0" font-size="19.8" fill="#ccccdc" text-anchor="start" font-weight="normal" textLength="81" lengthAdjust="spacingAndGlyphs" stroke="#ccccdc" stroke-width="0.3" >upper_75</text>
<text x="2510.5" y="1226.0" font-size="19.8" fill="#ccccdc" text-anchor="end" font-weight="normal" textLength="64.8" lengthAdjust="spacingAndGlyphs" stroke="#ccccdc" stroke-width="0.3" >535 ms</text>
<rect x="2293" y="1239.2" width="220.6" height="41" fill="#222327"/>
<rect x="2295.5" y="1258.2" width="21.6" height="6.4" rx="3.2" fill="#ef843c"/>
<text x="2333.2" y="1267.0" font-size="19.8" fill="#ccccdc" text-anchor="start" font-weight="normal" textLength="81" lengthAdjust="spacingAndGlyphs" stroke="#ccccdc" stroke-width="0.3" >upper_90</text>
<text x="2510.5" y="1267.0" font-size="19.8" fill="#ccccdc" text-anchor="end" font-weight="normal" textLength="50.7" lengthAdjust="spacingAndGlyphs" stroke="#ccccdc" stroke-width="0.3" >1.04 s</text>
<rect x="2295.5" y="1299.2" width="21.6" height="6.4" rx="3.2" fill="#e24d42"/>
<text x="2333.2" y="1308.0" font-size="19.8" fill="#ccccdc" text-anchor="start" font-weight="normal" textLength="81" lengthAdjust="spacingAndGlyphs" stroke="#ccccdc" stroke-width="0.3" >upper_95</text>
<text x="2510.5" y="1308.0" font-size="19.8" fill="#ccccdc" text-anchor="end" font-weight="normal" textLength="51.4" lengthAdjust="spacingAndGlyphs" stroke="#ccccdc" stroke-width="0.3" >1.46 s</text>
</svg></body></html>
